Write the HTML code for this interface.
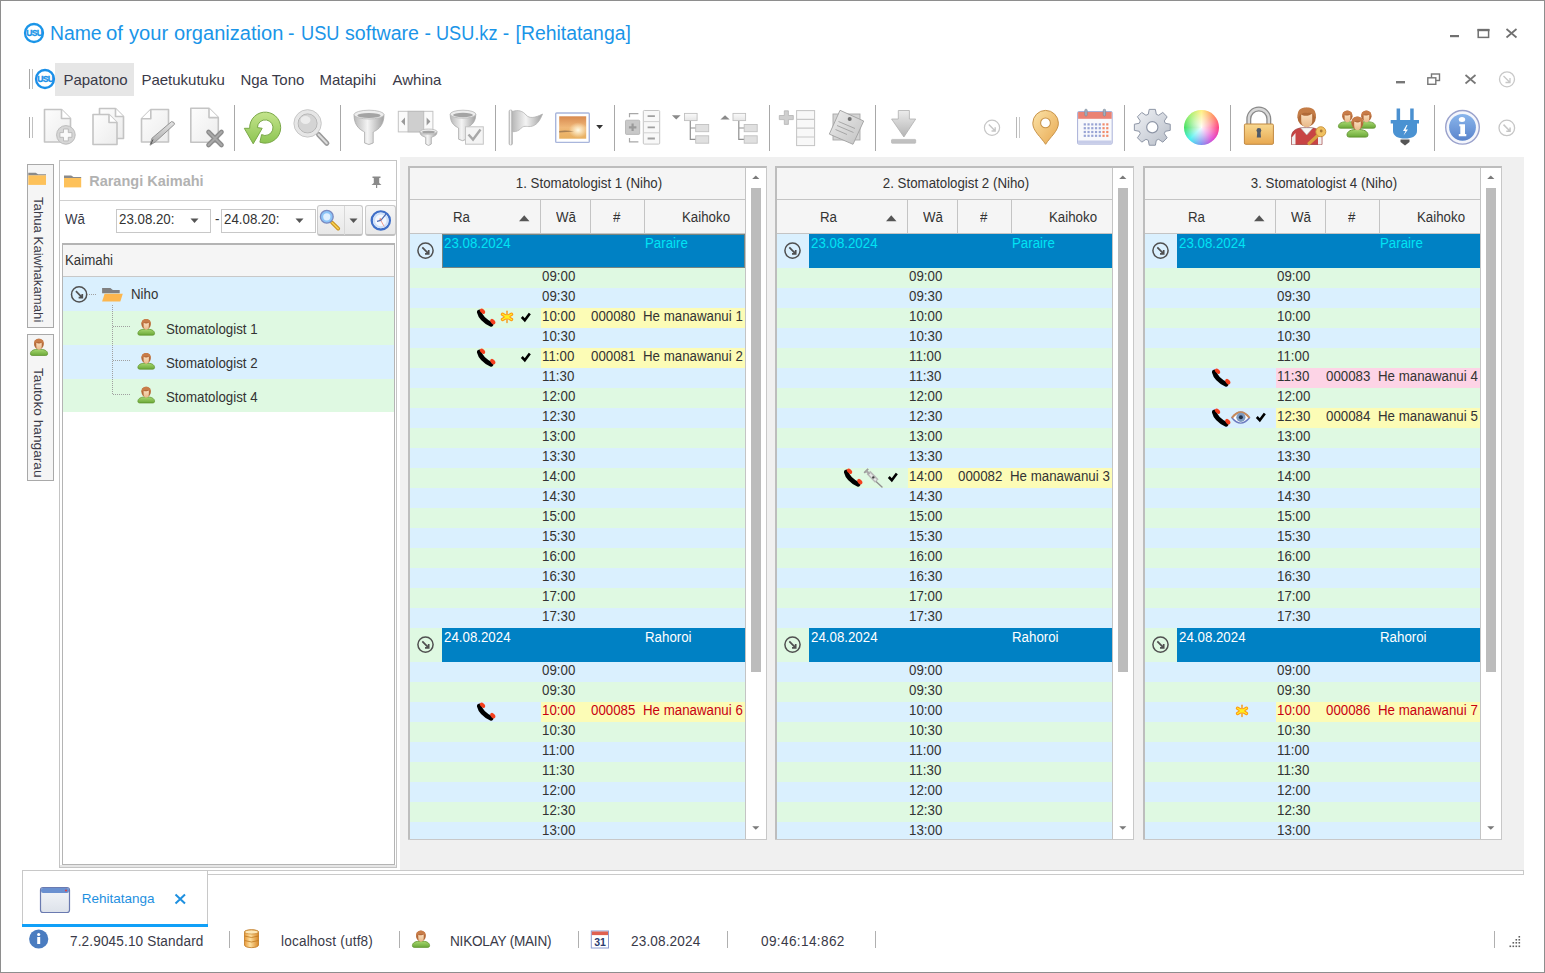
<!DOCTYPE html><html><head><meta charset="utf-8"><style>
html,body{margin:0;padding:0;width:1545px;height:973px;overflow:hidden;background:#fff;font-family:"Liberation Sans", sans-serif;}
div{box-sizing:border-box;}
svg{position:absolute;overflow:visible;}
</style></head><body>
<svg width="0" height="0" style="position:absolute;left:0;top:0"><defs>
<linearGradient id="gPage" x1="0" y1="0" x2="1" y2="1"><stop offset="0" stop-color="#fdfdfd"/><stop offset="1" stop-color="#ececec"/></linearGradient>
<linearGradient id="gGray" x1="0" y1="0" x2="0" y2="1"><stop offset="0" stop-color="#e4e4e4"/><stop offset="1" stop-color="#a8a8a8"/></linearGradient><linearGradient id="gPaper" x1="0" y1="0" x2="1" y2="1"><stop offset="0" stop-color="#eeeeee"/><stop offset="1" stop-color="#c2c2c2"/></linearGradient><linearGradient id="gArrow" x1="0" y1="0" x2="0" y2="1"><stop offset="0" stop-color="#ececec"/><stop offset="1" stop-color="#b4b4b4"/></linearGradient>
<linearGradient id="gGrayH" x1="0" y1="0" x2="1" y2="0"><stop offset="0" stop-color="#b8b8b8"/><stop offset="0.45" stop-color="#f4f4f4"/><stop offset="1" stop-color="#a0a0a0"/></linearGradient>
<linearGradient id="gGreen" x1="0" y1="0" x2="0" y2="1"><stop offset="0" stop-color="#c4e48c"/><stop offset="1" stop-color="#8cc452"/></linearGradient>
<linearGradient id="gSun" x1="0" y1="0" x2="0" y2="1"><stop offset="0" stop-color="#d88a50"/><stop offset="0.5" stop-color="#f0b878"/><stop offset="1" stop-color="#e8b060"/></linearGradient>
<radialGradient id="gSunR" cx="0.7" cy="0.62" r="0.35"><stop offset="0" stop-color="#fffbe8"/><stop offset="1" stop-color="#fff4d0" stop-opacity="0"/></radialGradient>
<linearGradient id="gPin" x1="0" y1="0" x2="1" y2="1"><stop offset="0" stop-color="#fbe3a8"/><stop offset="1" stop-color="#e8a850"/></linearGradient>
<linearGradient id="gGear" x1="0" y1="0" x2="1" y2="1"><stop offset="0" stop-color="#f0f2f6"/><stop offset="1" stop-color="#b8bec8"/></linearGradient>
<linearGradient id="gLock" x1="0" y1="0" x2="0" y2="1"><stop offset="0" stop-color="#f8d890"/><stop offset="1" stop-color="#e8a850"/></linearGradient>
<linearGradient id="gInfo" x1="0" y1="0" x2="0" y2="1"><stop offset="0" stop-color="#8ab6ec"/><stop offset="1" stop-color="#5a84cc"/></linearGradient>
<linearGradient id="gBody" x1="0" y1="0" x2="0" y2="1"><stop offset="0" stop-color="#a8d870"/><stop offset="1" stop-color="#6aa838"/></linearGradient>
<linearGradient id="gFace" x1="0" y1="0" x2="0" y2="1"><stop offset="0" stop-color="#fbe0c0"/><stop offset="1" stop-color="#e8b888"/></linearGradient>
<linearGradient id="gBtn" x1="0" y1="0" x2="0" y2="1"><stop offset="0" stop-color="#fafafa"/><stop offset="1" stop-color="#e6e6e6"/></linearGradient>
<linearGradient id="gLens" x1="0" y1="0" x2="1" y2="1"><stop offset="0" stop-color="#d8ecff"/><stop offset="1" stop-color="#4a90e0"/></linearGradient>
<linearGradient id="gDB" x1="0" y1="0" x2="1" y2="0"><stop offset="0" stop-color="#e89838"/><stop offset="0.4" stop-color="#fde0a0"/><stop offset="1" stop-color="#d88828"/></linearGradient>
<linearGradient id="gWin" x1="0" y1="0" x2="0" y2="1"><stop offset="0" stop-color="#f4f6fa"/><stop offset="1" stop-color="#dde2ea"/></linearGradient>
</defs></svg>
<div style="position:absolute;left:0px;top:0px;width:1545px;height:973px;border:1px solid #8e8e8e;background:#fff"></div>
<svg style="left:21.5px;top:20.5px" width="24" height="24"><circle cx="12" cy="12" r="9" fill="none" stroke="#1a95e8" stroke-width="2.3"/><text x="12.2" y="15.1" font-family="Liberation Sans" font-weight="bold" font-size="8.6" fill="#1a95e8" text-anchor="middle" letter-spacing="-0.7" stroke="#1a95e8" stroke-width="0.35">USU</text></svg>
<div style="position:absolute;left:49.9px;top:21.93px;font-size:19.40px;line-height:22.29px;color:#1a95e8;white-space:nowrap;">Name</div>
<div style="position:absolute;left:106.3px;top:21.93px;font-size:19.40px;line-height:22.29px;color:#1a95e8;white-space:nowrap;transform:scaleX(1.05);transform-origin:0 0;">of</div>
<div style="position:absolute;left:129.2px;top:21.93px;font-size:19.40px;line-height:22.29px;color:#1a95e8;white-space:nowrap;transform:scaleX(1.04);transform-origin:0 0;">your</div>
<div style="position:absolute;left:173.6px;top:21.93px;font-size:19.40px;line-height:22.29px;color:#1a95e8;white-space:nowrap;transform:scaleX(1.035);transform-origin:0 0;">organization</div>
<div style="position:absolute;left:288.1px;top:21.93px;font-size:19.40px;line-height:22.29px;color:#1a95e8;white-space:nowrap;">-</div>
<div style="position:absolute;left:300.5px;top:21.93px;font-size:19.40px;line-height:22.29px;color:#1a95e8;white-space:nowrap;transform:scaleX(0.94);transform-origin:0 0;">USU</div>
<div style="position:absolute;left:344.8px;top:21.93px;font-size:19.40px;line-height:22.29px;color:#1a95e8;white-space:nowrap;transform:scaleX(1.01);transform-origin:0 0;">software</div>
<div style="position:absolute;left:424.6px;top:21.93px;font-size:19.40px;line-height:22.29px;color:#1a95e8;white-space:nowrap;">-</div>
<div style="position:absolute;left:436.3px;top:21.93px;font-size:19.40px;line-height:22.29px;color:#1a95e8;white-space:nowrap;transform:scaleX(0.935);transform-origin:0 0;">USU.kz</div>
<div style="position:absolute;left:502.8px;top:21.93px;font-size:19.40px;line-height:22.29px;color:#1a95e8;white-space:nowrap;">-</div>
<div style="position:absolute;left:515.5px;top:21.93px;font-size:19.40px;line-height:22.29px;color:#1a95e8;white-space:nowrap;">[Rehitatanga]</div>
<svg style="left:1445px;top:25px" width="80" height="20"><rect x="5" y="10" width="9" height="2.2" fill="#707070"/><rect x="33.2" y="4.6" width="10.4" height="7.8" fill="none" stroke="#707070" stroke-width="1.5"/><rect x="32.5" y="4" width="12" height="2.2" fill="#707070"/><path d="M61.5 4 L71.5 12.5 M71.5 4 L61.5 12.5" stroke="#707070" stroke-width="1.7"/></svg>
<div style="position:absolute;left:29px;top:69px;width:1px;height:20px;background:#a8a8a8"></div>
<div style="position:absolute;left:32px;top:69px;width:1px;height:20px;background:#c0c0c0"></div>
<div style="position:absolute;left:55px;top:63px;width:79px;height:33px;background:#e6e6e6"></div>
<svg style="left:33px;top:66.5px" width="24" height="24"><circle cx="12" cy="12" r="9" fill="none" stroke="#1a8fe8" stroke-width="2.3"/><text x="12.2" y="15.1" font-family="Liberation Sans" font-weight="bold" font-size="8.6" fill="#1a8fe8" text-anchor="middle" letter-spacing="-0.7" stroke="#1a8fe8" stroke-width="0.35">USU</text></svg>
<div style="position:absolute;left:63.4px;top:70.78px;font-size:15.00px;line-height:17.23px;color:#3a3a48;white-space:nowrap;">Papatono</div>
<div style="position:absolute;left:141.4px;top:70.78px;font-size:15.00px;line-height:17.23px;color:#3a3a48;white-space:nowrap;">Paetukutuku</div>
<div style="position:absolute;left:240.4px;top:70.78px;font-size:15.00px;line-height:17.23px;color:#3a3a48;white-space:nowrap;">Nga Tono</div>
<div style="position:absolute;left:319.4px;top:70.78px;font-size:15.00px;line-height:17.23px;color:#3a3a48;white-space:nowrap;">Matapihi</div>
<div style="position:absolute;left:392.5px;top:70.78px;font-size:15.00px;line-height:17.23px;color:#3a3a48;white-space:nowrap;">Awhina</div>
<svg style="left:1390px;top:68px" width="140" height="24"><rect x="6" y="13" width="9" height="2.4" fill="#777"/><rect x="41.5" y="6" width="8" height="6.5" fill="none" stroke="#777" stroke-width="1.4"/><rect x="37.8" y="9.8" width="8" height="6.5" fill="#fff" stroke="#777" stroke-width="1.4"/><path d="M75.5 7 L85.5 15.5 M85.5 7 L75.5 15.5" stroke="#777" stroke-width="1.7"/><circle cx="117" cy="11.3" r="7.5" fill="none" stroke="#c8c8c8" stroke-width="1.3"/><path d="M113.5 8 L120 14.5 M120 10 L120 14.5 L115.5 14.5" stroke="#c8c8c8" stroke-width="1.3" fill="none"/></svg>
<div style="position:absolute;left:29px;top:117px;width:1px;height:21px;background:#a8a8a8"></div>
<div style="position:absolute;left:32px;top:117px;width:1px;height:21px;background:#c0c0c0"></div>
<div style="position:absolute;left:234px;top:105px;width:1px;height:46px;background:#a8a8a8"></div>
<div style="position:absolute;left:340px;top:105px;width:1px;height:46px;background:#a8a8a8"></div>
<div style="position:absolute;left:495px;top:105px;width:1px;height:46px;background:#a8a8a8"></div>
<div style="position:absolute;left:614px;top:105px;width:1px;height:46px;background:#a8a8a8"></div>
<div style="position:absolute;left:769px;top:105px;width:1px;height:46px;background:#a8a8a8"></div>
<div style="position:absolute;left:875px;top:105px;width:1px;height:46px;background:#a8a8a8"></div>
<div style="position:absolute;left:1124px;top:105px;width:1px;height:46px;background:#a8a8a8"></div>
<div style="position:absolute;left:1230px;top:105px;width:1px;height:46px;background:#a8a8a8"></div>
<div style="position:absolute;left:1434px;top:105px;width:1px;height:46px;background:#a8a8a8"></div>
<div style="position:absolute;left:1016px;top:117px;width:1px;height:21px;background:#b8b8b8"></div>
<div style="position:absolute;left:1019px;top:117px;width:1px;height:21px;background:#c8c8c8"></div>
<svg style="left:0;top:0" width="1545" height="160"><path d="M44.5 109.5 H61.5 L70.5 118.5 V142.0 H44.5 Z" fill="url(#gPage)" stroke="#c4c4c4" stroke-width="1.6" stroke-linejoin="round"/><path d="M61.5 109.5 V118.5 H70.5" fill="#fff" stroke="#c4c4c4" stroke-width="1.6" stroke-linejoin="round"/><circle cx="65.9" cy="134.9" r="9.3" fill="#d6d6d6" stroke="#bcbcbc" stroke-width="1"/><path d="M63.5 129 H68.3 V132.6 H71.9 V137.3 H68.3 V140.9 H63.5 V137.3 H59.9 V132.6 H63.5 Z" fill="#fafafa" stroke="#b0b0b0" stroke-width="0.8"/><path d="M99.5 108.5 H115.5 L123.5 116.5 V138.5 H99.5 Z" fill="url(#gPage)" stroke="#c4c4c4" stroke-width="1.6" stroke-linejoin="round"/><path d="M115.5 108.5 V116.5 H123.5" fill="#fff" stroke="#c4c4c4" stroke-width="1.6" stroke-linejoin="round"/><path d="M93 114.5 H109 L117 122.5 V144.5 H93 Z" fill="url(#gPage)" stroke="#c4c4c4" stroke-width="1.6" stroke-linejoin="round"/><path d="M109 114.5 V122.5 H117" fill="#fff" stroke="#c4c4c4" stroke-width="1.6" stroke-linejoin="round"/><path d="M150.8 109.5 H168.5 V142.0 H141.5 V118.8 Z" fill="url(#gPage)" stroke="#c4c4c4" stroke-width="1.6" stroke-linejoin="round"/><path d="M150.8 109.5 V118.8 H141.5" fill="#fff" stroke="#c4c4c4" stroke-width="1.6" stroke-linejoin="round"/><path d="M150 145.2 L152 138.2 L171.5 121.6 Q174.2 121.5 174.6 124.2 L155.4 141.8 Z" fill="url(#gGray)" stroke="#8a8a8a" stroke-width="0.9"/><path d="M151 144 L153 139.5" stroke="#555" stroke-width="1"/><path d="M190.8 108.3 H209.0 L218.3 117.6 V142.3 H190.8 Z" fill="url(#gPage)" stroke="#c4c4c4" stroke-width="1.6" stroke-linejoin="round"/><path d="M209.0 108.3 V117.6 H218.3" fill="#fff" stroke="#c4c4c4" stroke-width="1.6" stroke-linejoin="round"/><path d="M208.5 132 L221.5 145 M221.5 132 L208.5 145" stroke="#8c8c8c" stroke-width="4.6" stroke-linecap="round"/><path d="M208.5 132 L221.5 145 M221.5 132 L208.5 145" stroke="#a8a8a8" stroke-width="2" stroke-linecap="round"/><path d="M244.3 128.3 H249.7 A15.5 15.5 0 1 1 259.9 142.2 L261.6 134.6 A7.8 7.8 0 1 0 257.4 127.6 L262.2 128.3 L253.2 143.8 Z" fill="url(#gGreen)" stroke="#7aa848" stroke-width="1" stroke-linejoin="round"/><path d="M318.5 134.5 L326.8 143.2" stroke="#9a9a9a" stroke-width="5.2" stroke-linecap="round"/><path d="M318.5 134.5 L326.8 143.2" stroke="#dcdcdc" stroke-width="2" stroke-linecap="round"/><circle cx="307.6" cy="123.4" r="12" fill="none" stroke="#e6e6e6" stroke-width="3.6"/><circle cx="307.6" cy="123.4" r="13.7" fill="none" stroke="#c4c4c4" stroke-width="0.9"/><circle cx="307.6" cy="123.4" r="9.6" fill="#d4d4d4" stroke="#b4b4b4" stroke-width="1"/><ellipse cx="305.5" cy="120" rx="5" ry="4" fill="#ececec"/><path d="M354 114.60000000000001 C354 127.65 362.1 130.5 364.6 132 V143.0 Q369.0 146.0 373.2 143.0 V132 C375.7 130.5 384 127.65 384 114.60000000000001 Z" fill="url(#gGrayH)" stroke="#a8a8a8" stroke-width="0.8"/><ellipse cx="369.0" cy="114.60000000000001" rx="15.0" ry="4.4" fill="#ededed" stroke="#b8b8b8" stroke-width="0.8"/><ellipse cx="369.0" cy="115.48" rx="11.700000000000001" ry="2.4200000000000004" fill="#a4a4a4"/><rect x="398.3" y="111.3" width="34.6" height="20.6" fill="#fafafa" stroke="#c4c4c4" stroke-width="1"/><rect x="408" y="111.3" width="15.8" height="20.6" fill="#cfcfcf" stroke="#b8b8b8" stroke-width="0.8"/><path d="M405 117.5 V125.5 L401.2 121.5 Z" fill="#9a9a9a"/><path d="M426.6 117.5 V125.5 L430.4 121.5 Z" fill="#9a9a9a"/><path d="M420 131.6 C420 136.025 423.2 136.0 425.7 137.5 V144.0 Q428.5 147.0 431.3 144.0 V137.5 C433.8 136.0 437 136.025 437 131.6 Z" fill="url(#gGrayH)" stroke="#a8a8a8" stroke-width="0.8"/><ellipse cx="428.5" cy="131.6" rx="8.5" ry="2.6" fill="#ededed" stroke="#b8b8b8" stroke-width="0.8"/><ellipse cx="428.5" cy="132.12" rx="6.63" ry="1.4300000000000002" fill="#a4a4a4"/><path d="M450.2 114.2 C450.2 124.55 456.1 126.5 458.6 128 V139.2 Q463.0 142.2 466 139.2 V128 C468.5 126.5 475.8 124.55 475.8 114.2 Z" fill="url(#gGrayH)" stroke="#a8a8a8" stroke-width="0.8"/><ellipse cx="463.0" cy="114.2" rx="12.800000000000011" ry="4" fill="#ededed" stroke="#b8b8b8" stroke-width="0.8"/><ellipse cx="463.0" cy="115.0" rx="9.984000000000009" ry="2.2" fill="#a4a4a4"/><rect x="465.5" y="126.8" width="17.8" height="17.4" fill="#f4f4f4" stroke="#c4c4c4" stroke-width="1"/><path d="M468.5 134.5 L473 139.5 L480.5 129.5" fill="none" stroke="#a8a8a8" stroke-width="2.4"/><rect x="509" y="110" width="3.4" height="35" rx="1.5" fill="url(#gGrayH)" stroke="#a8a8a8" stroke-width="0.6"/><path d="M512.4 111.5 C518 109.5 523 111 526 115 C529.5 118.8 535 118 542.5 114 C540 121 536 126 530.5 126.5 C526 127 524 124.5 519.5 129.8 C517 131.5 514 132 512.4 131.5 Z" fill="url(#gGrayH)" stroke="#b4b4b4" stroke-width="0.8"/><rect x="555.7" y="113" width="33.6" height="29.4" rx="1" fill="#fff" stroke="#a9b6dc" stroke-width="1.4"/><rect x="559.2" y="116.3" width="27" height="22.4" fill="url(#gSun)"/><rect x="559.2" y="116.3" width="27" height="22.4" fill="url(#gSunR)"/><path d="M559.2 131 Q566 130 574 131.5 L559.2 132.5 Z" fill="#8a6a48" opacity="0.7"/><path d="M596.2 125 H603 L599.6 128.9 Z" fill="#333"/><path d="M629.5 117.3 V113.6 H638.4 M629.5 138 V141.8 H638.4" fill="none" stroke="#a8a8a8" stroke-width="1.2"/><rect x="625.5" y="120.2" width="14.2" height="14.2" rx="1" fill="#c8c8c8" stroke="#b0b0b0" stroke-width="0.8"/><path d="M632.6 123.5 V131 M628.9 127.3 H636.4" stroke="#9a9a9a" stroke-width="2.2"/><rect x="643.3" y="110.5" width="16.4" height="33.6" rx="1" fill="#f8f8f8" stroke="#c4c4c4" stroke-width="1"/><path d="M643.3 121.6 H659.7 M643.3 132.8 H659.7" stroke="#d0d0d0" stroke-width="1"/><path d="M647.6 116.1 H654.9 M647.6 127.3 H654.9 M647.6 138.5 H654.9" stroke="#a0a0a0" stroke-width="1.8"/><path d="M671.9 115.2 H680.6 L676.25 119.6 Z" fill="#8a8a8a"/><path d="M690.3 120.5 V139.4 H696.0 M690.3 128 H696.0" fill="none" stroke="#909090" stroke-width="1.2"/><rect x="684.5" y="113.4" width="12.6" height="7.2" fill="url(#gBtn)" stroke="#c0c0c0" stroke-width="0.9"/><rect x="695.7" y="124.5" width="13" height="7.2" fill="#e0e0e0" stroke="#c0c0c0" stroke-width="0.9"/><rect x="695.7" y="135.8" width="13" height="7.4" fill="#e0e0e0" stroke="#c0c0c0" stroke-width="0.9"/><path d="M720.4 119.6 H729.6999999999999 L725.05 115.2 Z" fill="#8a8a8a"/><path d="M738.8 120.5 V139.4 H744.5 M738.8 128 H744.5" fill="none" stroke="#909090" stroke-width="1.2"/><rect x="733.0" y="113.4" width="12.6" height="7.2" fill="url(#gBtn)" stroke="#c0c0c0" stroke-width="0.9"/><rect x="744.2" y="124.5" width="13" height="7.2" fill="#e0e0e0" stroke="#c0c0c0" stroke-width="0.9"/><rect x="744.2" y="135.8" width="13" height="7.4" fill="#e0e0e0" stroke="#c0c0c0" stroke-width="0.9"/><path d="M784.3 110.8 H788.4 V115.5 H793.3 V119.6 H788.4 V124.4 H784.3 V119.6 H779.3 V115.5 H784.3 Z" fill="#cfcfcf" stroke="#b4b4b4" stroke-width="0.8"/><rect x="796.6" y="110.6" width="18" height="35" fill="#f8f8f8" stroke="#c4c4c4" stroke-width="1"/><path d="M796.6 119.3 H814.6 M796.6 128.1 H814.6 M796.6 137 H814.6" stroke="#c8c8c8" stroke-width="1.2"/><rect x="833" y="114" width="27" height="26" fill="#d4d4d4" stroke="#a8a8a8" stroke-width="0.9"/><path d="M829.3 134.1 L840 110.3 L863.7 121 L853 144.3 Z" fill="url(#gPaper)" stroke="#a0a0a0" stroke-width="0.9"/><path d="M838.5 121.5 L855 128.5 M837 125.5 L853.5 132.5 M835.5 129.5 L847 134.5" stroke="#999" stroke-width="0.8"/><circle cx="849.7" cy="119" r="2" fill="#707070"/><path d="M898.3 110.5 H909.4 V119 H915.7 L903.9 137 L891.6 119 H898.3 Z" fill="url(#gArrow)" stroke="#b0b0b0" stroke-width="0.8"/><rect x="891.5" y="139.4" width="24.2" height="3.9" rx="0.8" fill="#c0c0c0" stroke="#b0b0b0" stroke-width="0.6"/><circle cx="992" cy="127.8" r="7.6" fill="none" stroke="#c6c6c6" stroke-width="1.2"/><path d="M988.808 124.608 L995.192 130.992 M995.192 127.32119999999999 V130.992 H991.5212" fill="none" stroke="#c6c6c6" stroke-width="1.38"/><path d="M1045.6 144.3 C1041 137 1032.8 131 1032.8 123.2 A12.8 12.8 0 0 1 1058.4 123.2 C1058.4 131 1050.2 137 1045.6 144.3 Z" fill="url(#gPin)" stroke="#c8944a" stroke-width="1"/><circle cx="1045.5" cy="122.9" r="4.9" fill="#fff" stroke="#c8944a" stroke-width="1.1"/><rect x="1077.6" y="111.5" width="34.6" height="32.6" rx="1.2" fill="#f8f9fc" stroke="#a8b0d8" stroke-width="1"/><rect x="1078.1" y="112" width="33.6" height="6.8" fill="#ea8274"/><rect x="1078.1" y="140.5" width="33.6" height="3.2" fill="#c6cce8"/><rect x="1084.8" y="109.2" width="2.4" height="6.8" rx="1" fill="#a0b0c0" stroke="#708090" stroke-width="0.5"/><rect x="1103.2" y="109.2" width="2.4" height="6.8" rx="1" fill="#a0b0c0" stroke="#708090" stroke-width="0.5"/><rect x="1083.70" y="123.30" width="2.2" height="2.2" fill="#98a4d4"/><rect x="1087.45" y="123.30" width="2.2" height="2.2" fill="#98a4d4"/><rect x="1091.20" y="123.30" width="2.2" height="2.2" fill="#98a4d4"/><rect x="1094.95" y="123.30" width="2.2" height="2.2" fill="#98a4d4"/><rect x="1098.70" y="123.30" width="2.2" height="2.2" fill="#98a4d4"/><rect x="1102.45" y="123.30" width="2.2" height="2.2" fill="#f08a6a"/><rect x="1106.20" y="123.30" width="2.2" height="2.2" fill="#f08a6a"/><rect x="1083.70" y="127.10" width="2.2" height="2.2" fill="#98a4d4"/><rect x="1087.45" y="127.10" width="2.2" height="2.2" fill="#98a4d4"/><rect x="1091.20" y="127.10" width="2.2" height="2.2" fill="#98a4d4"/><rect x="1094.95" y="127.10" width="2.2" height="2.2" fill="#98a4d4"/><rect x="1098.70" y="127.10" width="2.2" height="2.2" fill="#98a4d4"/><rect x="1102.45" y="127.10" width="2.2" height="2.2" fill="#f08a6a"/><rect x="1106.20" y="127.10" width="2.2" height="2.2" fill="#f08a6a"/><rect x="1083.70" y="130.90" width="2.2" height="2.2" fill="#98a4d4"/><rect x="1087.45" y="130.90" width="2.2" height="2.2" fill="#98a4d4"/><rect x="1091.20" y="130.90" width="2.2" height="2.2" fill="#98a4d4"/><rect x="1094.95" y="130.90" width="2.2" height="2.2" fill="#98a4d4"/><rect x="1098.70" y="130.90" width="2.2" height="2.2" fill="#98a4d4"/><rect x="1102.45" y="130.90" width="2.2" height="2.2" fill="#f08a6a"/><rect x="1106.20" y="130.90" width="2.2" height="2.2" fill="#f08a6a"/><rect x="1083.70" y="134.70" width="2.2" height="2.2" fill="#98a4d4"/><rect x="1087.45" y="134.70" width="2.2" height="2.2" fill="#98a4d4"/><rect x="1091.20" y="134.70" width="2.2" height="2.2" fill="#98a4d4"/><rect x="1094.95" y="134.70" width="2.2" height="2.2" fill="#98a4d4"/><rect x="1098.70" y="134.70" width="2.2" height="2.2" fill="#98a4d4"/><rect x="1102.45" y="134.70" width="2.2" height="2.2" fill="#f08a6a"/><rect x="1106.20" y="134.70" width="2.2" height="2.2" fill="#f08a6a"/><polygon points="1148.28,114.31 1149.22,109.36 1155.38,109.36 1156.32,114.31 1158.65,115.27 1162.81,112.44 1167.16,116.79 1164.33,120.95 1165.29,123.28 1170.24,124.22 1170.24,130.38 1165.29,131.32 1164.33,133.65 1167.16,137.81 1162.81,142.16 1158.65,139.33 1156.32,140.29 1155.38,145.24 1149.22,145.24 1148.28,140.29 1145.95,139.33 1141.79,142.16 1137.44,137.81 1140.27,133.65 1139.31,131.32 1134.36,130.38 1134.36,124.22 1139.31,123.28 1140.27,120.95 1137.44,116.79 1141.79,112.44 1145.95,115.27" fill="url(#gGear)" stroke="#8e96a6" stroke-width="1" stroke-linejoin="round"/><circle cx="1152.3" cy="127.3" r="5.6" fill="#fff" stroke="#8e96a6" stroke-width="1.2"/><path d="M1248.8 124.5 V119 A10 10 0 0 1 1268.8 119 V124.5" fill="none" stroke="#8a8a8a" stroke-width="5"/><path d="M1248.8 124.5 V119 A10 10 0 0 1 1268.8 119 V124.5" fill="none" stroke="#d8d8d8" stroke-width="2.4"/><rect x="1244.4" y="124" width="29" height="20.3" rx="1.2" fill="url(#gLock)" stroke="#c08840" stroke-width="1"/><circle cx="1258.9" cy="130.5" r="2.4" fill="#505a68"/><path d="M1257.4 131 L1256.8 137.6 H1261 L1260.4 131 Z" fill="#505a68"/><path d="M1291.5 144.5 V137 C1291.5 130 1297 127.5 1306.7 127.5 C1316.4 127.5 1322 130 1322 137 V144.5 Z" fill="#c84444" stroke="#903030" stroke-width="0.7"/><path d="M1300.5 127.8 L1306.7 135 L1313 127.8 Z" fill="#f8f8f8" stroke="#b0b0b0" stroke-width="0.6"/><path d="M1291.8 137.5 V144.5 H1295.5 V133 Z" fill="#f0f0f0"/><path d="M1321.7 137.5 V144.5 H1318 V133 Z" fill="#f0f0f0"/><ellipse cx="1306.7" cy="117.3" rx="9.2" ry="9.6" fill="#b06a38"/><path d="M1301.2 114.5 C1303.5 116.5 1309.5 116.3 1312.2 113.5 V120.5 C1312.2 125 1309.5 127.2 1306.7 127.2 C1303.9 127.2 1301.2 125 1301.2 120.5 Z" fill="url(#gFace)"/><path d="M1298 119 C1296.5 110 1300.5 107.6 1306.7 107.6 C1312.9 107.6 1316.9 110 1315.4 119 C1314.5 114.5 1311.5 112.3 1307.5 113 C1304 112.3 1299.5 113.5 1298 119 Z" fill="#c47c46"/><path d="M1320 133.5 L1309 143.5" stroke="#d8a040" stroke-width="3.2" stroke-linecap="round"/><circle cx="1320.8" cy="131.7" r="5" fill="#f0c060" stroke="#c89038" stroke-width="0.9"/><circle cx="1321.2" cy="131" r="1.4" fill="#a87838"/><g transform="translate(1338 110.5) scale(1.05)"><path d="M0.4 15.2 C0.4 12 3.8 10.6 9 10.6 C14.2 10.6 17.6 12 17.6 15.2 Q17.6 16.9 15.8 16.9 H2.2 Q0.4 16.9 0.4 15.2 Z" fill="url(#gBody)" stroke="#5a8e28" stroke-width="0.7"/><ellipse cx="8.9" cy="5.4" rx="4.9" ry="5.3" fill="#b46a3a"/><path d="M6.3 4.2 C7.5 5.2 10.5 5 11.7 3.8 V7.5 C11.7 10.2 10.3 11.2 9 11.2 C7.7 11.2 6.3 10.2 6.3 7.5 Z" fill="url(#gFace)"/><path d="M4.2 6 C3.6 1.5 6.2 0.2 8.9 0.2 C11.6 0.2 14.2 1.5 13.6 6 C12.8 4 11.2 3.3 9.5 3.6 C8 3.2 5.2 3.6 4.2 6 Z" fill="#c87c48"/></g><g transform="translate(1357 110.5) scale(1.05)"><path d="M0.4 15.2 C0.4 12 3.8 10.6 9 10.6 C14.2 10.6 17.6 12 17.6 15.2 Q17.6 16.9 15.8 16.9 H2.2 Q0.4 16.9 0.4 15.2 Z" fill="url(#gBody)" stroke="#5a8e28" stroke-width="0.7"/><ellipse cx="8.9" cy="5.4" rx="4.9" ry="5.3" fill="#b46a3a"/><path d="M6.3 4.2 C7.5 5.2 10.5 5 11.7 3.8 V7.5 C11.7 10.2 10.3 11.2 9 11.2 C7.7 11.2 6.3 10.2 6.3 7.5 Z" fill="url(#gFace)"/><path d="M4.2 6 C3.6 1.5 6.2 0.2 8.9 0.2 C11.6 0.2 14.2 1.5 13.6 6 C12.8 4 11.2 3.3 9.5 3.6 C8 3.2 5.2 3.6 4.2 6 Z" fill="#c87c48"/></g><g transform="translate(1346.5 116.5) scale(1.22)"><path d="M0.4 15.2 C0.4 12 3.8 10.6 9 10.6 C14.2 10.6 17.6 12 17.6 15.2 Q17.6 16.9 15.8 16.9 H2.2 Q0.4 16.9 0.4 15.2 Z" fill="url(#gBody)" stroke="#5a8e28" stroke-width="0.7"/><ellipse cx="8.9" cy="5.4" rx="4.9" ry="5.3" fill="#b46a3a"/><path d="M6.3 4.2 C7.5 5.2 10.5 5 11.7 3.8 V7.5 C11.7 10.2 10.3 11.2 9 11.2 C7.7 11.2 6.3 10.2 6.3 7.5 Z" fill="url(#gFace)"/><path d="M4.2 6 C3.6 1.5 6.2 0.2 8.9 0.2 C11.6 0.2 14.2 1.5 13.6 6 C12.8 4 11.2 3.3 9.5 3.6 C8 3.2 5.2 3.6 4.2 6 Z" fill="#c87c48"/></g><rect x="1396.6" y="108.5" width="3.5" height="12" fill="#4a90d0"/><rect x="1410.2" y="108.5" width="3.5" height="12" fill="#4a90d0"/><path d="M1390.7 120 H1419 V123.5 H1417 V131 C1417 136 1412 138.5 1405 138.5 C1398 138.5 1393 136 1393 131 V123.5 H1390.7 Z" fill="#4a92d2"/><path d="M1406.5 125 L1403 131 H1405.5 L1403.5 135.5 L1408 129.5 H1405.5 L1407.5 125 Z" fill="#fff"/><path d="M1400.5 139.5 H1409.5 V142 L1405 145.5 L1400.5 142 Z" fill="#555"/><circle cx="1462.5" cy="127.3" r="16.8" fill="#f4f6fc" stroke="#9aa2cc" stroke-width="1.4"/><circle cx="1462.5" cy="127.3" r="13.4" fill="url(#gInfo)"/><ellipse cx="1462" cy="119.6" rx="3.2" ry="2.5" fill="#fff"/><path d="M1459.3 124.3 H1465 V134 H1466.3 V136.2 H1458.8 V134 H1460.3 V126.2 H1459.3 Z" fill="#fff"/><circle cx="1506.8" cy="127.9" r="7.8" fill="none" stroke="#c6c6c6" stroke-width="1.3"/><path d="M1503.524 124.62400000000001 L1510.076 131.17600000000002 M1510.076 127.4086 V131.17600000000002 H1506.3085999999998" fill="none" stroke="#c6c6c6" stroke-width="1.4949999999999999"/></svg>
<div style="position:absolute;left:1183.8px;top:109.8px;width:35px;height:35px;border-radius:50%;background:radial-gradient(circle at 50% 50%, rgba(255,255,255,0.95) 0, rgba(255,255,255,0.5) 35%, rgba(255,255,255,0) 70%), conic-gradient(from 0deg, #fff080, #ff9060, #ff4080, #e040d0, #8090f0, #40f0f0, #40e060, #a0f070, #fff080)"></div>
<div style="position:absolute;left:400px;top:157px;width:1124px;height:714px;background:#f0f0f0"></div>
<div style="position:absolute;left:27px;top:164px;width:27px;height:164px;border:1px solid #a9a9a9;background:#f5f5f5"></div>
<div style="position:absolute;left:27px;top:334px;width:27px;height:147px;border:1px solid #a9a9a9;background:#f5f5f5"></div>
<svg style="left:0;top:0" width="400" height="500"><path d="M28.3 172.8 H35.734 L38.035000000000004 174.3 H46.0 V175.38000000000002 H28.3 Z" fill="#8a8a8a"/><rect x="28.3" y="175.38000000000002" width="17.7" height="9.52" fill="#fdc15a"/><g transform="translate(30 338.6) scale(1.0)"><path d="M0.4 15.2 C0.4 12 3.8 10.6 9 10.6 C14.2 10.6 17.6 12 17.6 15.2 Q17.6 16.9 15.8 16.9 H2.2 Q0.4 16.9 0.4 15.2 Z" fill="url(#gBody)" stroke="#5a8e28" stroke-width="0.7"/><ellipse cx="8.9" cy="5.4" rx="4.9" ry="5.3" fill="#b46a3a"/><path d="M6.3 4.2 C7.5 5.2 10.5 5 11.7 3.8 V7.5 C11.7 10.2 10.3 11.2 9 11.2 C7.7 11.2 6.3 10.2 6.3 7.5 Z" fill="url(#gFace)"/><path d="M4.2 6 C3.6 1.5 6.2 0.2 8.9 0.2 C11.6 0.2 14.2 1.5 13.6 6 C12.8 4 11.2 3.3 9.5 3.6 C8 3.2 5.2 3.6 4.2 6 Z" fill="#c87c48"/></g></svg>
<div style="position:absolute;left:45px;top:197px;transform-origin:0 0;transform:rotate(90deg);font-size:13.2px;line-height:14px;color:#3a3a48;white-space:nowrap">Tahua Kaiwhakamahi</div>
<div style="position:absolute;left:45px;top:367.5px;transform-origin:0 0;transform:rotate(90deg);font-size:13.7px;line-height:14px;color:#3a3a48;white-space:nowrap">Tautoko hangarau</div>
<div style="position:absolute;left:59px;top:160px;width:338px;height:708px;border:1px solid #c4c4c4;background:#fff"></div>
<div style="position:absolute;left:60px;top:865px;width:336px;height:2px;background:#e6e6e6"></div>
<div style="position:absolute;left:60px;top:200px;width:336px;height:1px;background:#d0d0d0"></div>
<div style="position:absolute;left:89.2px;top:172.65px;font-size:14.50px;line-height:16.66px;color:#b2b2b2;white-space:nowrap;font-weight:bold">Rarangi Kaimahi</div>
<div style="position:absolute;left:64.8px;top:211.13px;font-size:14.63px;line-height:16.81px;color:#3a3a48;white-space:nowrap;transform:scaleX(0.9091);transform-origin:0 0;">Wā</div>
<div style="position:absolute;left:116px;top:209px;width:95px;height:24px;border:1px solid #c8c8c8;background:#fff"></div>
<div style="position:absolute;left:119px;top:211.13px;font-size:14.63px;line-height:16.81px;color:#333;white-space:nowrap;transform:scaleX(0.9091);transform-origin:0 0;">23.08.20:</div>
<div style="position:absolute;left:221px;top:209px;width:95px;height:24px;border:1px solid #c8c8c8;background:#fff"></div>
<div style="position:absolute;left:224px;top:211.13px;font-size:14.63px;line-height:16.81px;color:#333;white-space:nowrap;transform:scaleX(0.9091);transform-origin:0 0;">24.08.20:</div>
<div style="position:absolute;left:214.5px;top:211.13px;font-size:14.63px;line-height:16.81px;color:#333;white-space:nowrap;transform:scaleX(0.9091);transform-origin:0 0;">-</div>
<svg style="left:190px;top:218px" width="10" height="6"><path d="M0.5 0.5 L8.5 0.5 L4.5 5 Z" fill="#555"/></svg>
<svg style="left:295px;top:218px" width="10" height="6"><path d="M0.5 0.5 L8.5 0.5 L4.5 5 Z" fill="#555"/></svg>
<div style="position:absolute;left:316.5px;top:205px;width:46.5px;height:31px;border:1px solid #cacaca;border-bottom:2px solid #c0c0c0;border-radius:3px;background:linear-gradient(#f6f6f6,#e8e8e8)"></div>
<div style="position:absolute;left:344px;top:206px;width:1px;height:29px;background:#d8d8d8"></div>
<svg style="left:349px;top:218px" width="10" height="6"><path d="M0.5 0.5 L8.5 0.5 L4.5 5 Z" fill="#555"/></svg>
<div style="position:absolute;left:364.5px;top:205px;width:31px;height:31px;border:1px solid #cacaca;border-bottom:2px solid #c0c0c0;border-radius:3px;background:linear-gradient(#f6f6f6,#e8e8e8)"></div>
<div style="position:absolute;left:62px;top:243px;width:333px;height:622px;border:1px solid #b4b4b4;border-top:2px solid #b4b4b4;background:#fff"></div>
<div style="position:absolute;left:63px;top:245px;width:331px;height:32px;background:#f5f5f5;border-bottom:1px solid #c8c8c8"></div>
<div style="position:absolute;left:65.4px;top:252.23px;font-size:14.63px;line-height:16.81px;color:#333;white-space:nowrap;transform:scaleX(0.9091);transform-origin:0 0;">Kaimahi</div>
<div style="position:absolute;left:63px;top:277px;width:331px;height:34px;background:#daf0fe"></div>
<div style="position:absolute;left:63px;top:311px;width:331px;height:34px;background:#dff9e2"></div>
<div style="position:absolute;left:63px;top:345px;width:331px;height:34px;background:#daf0fe"></div>
<div style="position:absolute;left:63px;top:379px;width:331px;height:33px;background:#dff9e2"></div>
<div style="position:absolute;left:131.2px;top:286.33px;font-size:14.63px;line-height:16.81px;color:#333;white-space:nowrap;transform:scaleX(0.9091);transform-origin:0 0;">Niho</div>
<div style="position:absolute;left:165.6px;top:321.03px;font-size:14.63px;line-height:16.81px;color:#333;white-space:nowrap;transform:scaleX(0.9091);transform-origin:0 0;">Stomatologist 1</div>
<div style="position:absolute;left:165.6px;top:355.03px;font-size:14.63px;line-height:16.81px;color:#333;white-space:nowrap;transform:scaleX(0.9091);transform-origin:0 0;">Stomatologist 2</div>
<div style="position:absolute;left:165.6px;top:389.03px;font-size:14.63px;line-height:16.81px;color:#333;white-space:nowrap;transform:scaleX(0.9091);transform-origin:0 0;">Stomatologist 4</div>
<svg style="left:0;top:0" width="400" height="420"><path d="M64 175.5 H71.224 L73.46000000000001 177 H81.2 V178.02 H64 Z" fill="#8a8a8a"/><rect x="64" y="178.02" width="17.2" height="9.379999999999999" fill="#fdc15a"/><path d="M372.5 176.5 H380.5 V178 H379.2 V183 L381.5 185 H371.5 L373.8 183 V178 H372.5 Z" fill="#8a8a8a"/><rect x="376" y="185" width="1.2" height="3" fill="#8a8a8a"/><path d="M332 222.5 L338.2 228.6" stroke="#c89020" stroke-width="3.8" stroke-linecap="round"/><path d="M332 222.5 L338.2 228.6" stroke="#f8d050" stroke-width="1.6" stroke-linecap="round"/><circle cx="326.8" cy="216.8" r="6.4" fill="#8cc4f8" stroke="#7a8ac0" stroke-width="1.3"/><circle cx="326.8" cy="216.8" r="3.6" fill="#dff0ff"/><circle cx="380.8" cy="220.4" r="9.1" fill="#f4f8ff" stroke="#3f6fc8" stroke-width="2.3"/><circle cx="380.8" cy="220.4" r="6.8" fill="none" stroke="#cfe0f8" stroke-width="2"/><path d="M380.8 220.4 L384.2 226.5" stroke="#f0a090" stroke-width="1"/><path d="M380.8 220.4 L386 214.2 M380.8 220.4 L377 221.3" stroke="#4a68b0" stroke-width="1.2"/><circle cx="380.4" cy="219.2" r="1" fill="#e08070"/><circle cx="79.1" cy="294.4" r="7.6" fill="none" stroke="#505050" stroke-width="1.5"/><path d="M75.908 291.20799999999997 L82.29199999999999 297.592 M82.29199999999999 293.9212 V297.592 H78.62119999999999" fill="none" stroke="#505050" stroke-width="1.7249999999999999"/><path d="M87 294.5 H96" stroke="#a0a0a0" stroke-width="1" stroke-dasharray="1 1"/><path d="M102.1 288 H110.38 L112.86399999999999 290 H119.695 V293.36 H102.1 Z" fill="#808080"/><path d="M104.58399999999999 293.628 H122.8 L120.316 301.4 H102.1 Z" fill="#fcb64e"/><path d="M112.5 305 V395 M113 326.5 H131 M113 360.5 H131 M113 394.5 H131" stroke="#a0a0a0" stroke-width="1" stroke-dasharray="1 1"/><g transform="translate(137.5 318.8) scale(0.97)"><path d="M0.4 15.2 C0.4 12 3.8 10.6 9 10.6 C14.2 10.6 17.6 12 17.6 15.2 Q17.6 16.9 15.8 16.9 H2.2 Q0.4 16.9 0.4 15.2 Z" fill="url(#gBody)" stroke="#5a8e28" stroke-width="0.7"/><ellipse cx="8.9" cy="5.4" rx="4.9" ry="5.3" fill="#b46a3a"/><path d="M6.3 4.2 C7.5 5.2 10.5 5 11.7 3.8 V7.5 C11.7 10.2 10.3 11.2 9 11.2 C7.7 11.2 6.3 10.2 6.3 7.5 Z" fill="url(#gFace)"/><path d="M4.2 6 C3.6 1.5 6.2 0.2 8.9 0.2 C11.6 0.2 14.2 1.5 13.6 6 C12.8 4 11.2 3.3 9.5 3.6 C8 3.2 5.2 3.6 4.2 6 Z" fill="#c87c48"/></g><g transform="translate(137.5 352.8) scale(0.97)"><path d="M0.4 15.2 C0.4 12 3.8 10.6 9 10.6 C14.2 10.6 17.6 12 17.6 15.2 Q17.6 16.9 15.8 16.9 H2.2 Q0.4 16.9 0.4 15.2 Z" fill="url(#gBody)" stroke="#5a8e28" stroke-width="0.7"/><ellipse cx="8.9" cy="5.4" rx="4.9" ry="5.3" fill="#b46a3a"/><path d="M6.3 4.2 C7.5 5.2 10.5 5 11.7 3.8 V7.5 C11.7 10.2 10.3 11.2 9 11.2 C7.7 11.2 6.3 10.2 6.3 7.5 Z" fill="url(#gFace)"/><path d="M4.2 6 C3.6 1.5 6.2 0.2 8.9 0.2 C11.6 0.2 14.2 1.5 13.6 6 C12.8 4 11.2 3.3 9.5 3.6 C8 3.2 5.2 3.6 4.2 6 Z" fill="#c87c48"/></g><g transform="translate(137.5 386.6) scale(0.97)"><path d="M0.4 15.2 C0.4 12 3.8 10.6 9 10.6 C14.2 10.6 17.6 12 17.6 15.2 Q17.6 16.9 15.8 16.9 H2.2 Q0.4 16.9 0.4 15.2 Z" fill="url(#gBody)" stroke="#5a8e28" stroke-width="0.7"/><ellipse cx="8.9" cy="5.4" rx="4.9" ry="5.3" fill="#b46a3a"/><path d="M6.3 4.2 C7.5 5.2 10.5 5 11.7 3.8 V7.5 C11.7 10.2 10.3 11.2 9 11.2 C7.7 11.2 6.3 10.2 6.3 7.5 Z" fill="url(#gFace)"/><path d="M4.2 6 C3.6 1.5 6.2 0.2 8.9 0.2 C11.6 0.2 14.2 1.5 13.6 6 C12.8 4 11.2 3.3 9.5 3.6 C8 3.2 5.2 3.6 4.2 6 Z" fill="#c87c48"/></g></svg>
<div style="position:absolute;left:408px;top:166px;width:359px;height:674px;border:2px solid #bdbdbd;border-right:1px solid #c8c8c8;border-bottom:1px solid #c8c8c8;background:#fff"></div>
<div style="position:absolute;left:410px;top:168px;width:336px;height:32px;background:#f5f5f5;border-bottom:1px solid #c4c4c4"></div>
<div style="position:absolute;left:389px;width:400px;text-align:center;top:175.33px;font-size:14.63px;line-height:16.81px;color:#333;white-space:nowrap;transform:scaleX(0.9091);transform-origin:50% 0;">1. Stomatologist 1 (Niho)</div>
<div style="position:absolute;left:410px;top:200px;width:336px;height:34px;background:#f5f5f5;border-bottom:1px solid #c4c4c4"></div>
<div style="position:absolute;left:540px;top:200px;width:1px;height:33px;background:#c4c4c4"></div>
<div style="position:absolute;left:590px;top:200px;width:1px;height:33px;background:#c4c4c4"></div>
<div style="position:absolute;left:644px;top:200px;width:1px;height:33px;background:#c4c4c4"></div>
<div style="position:absolute;left:745px;top:168px;width:1px;height:671px;background:#c4c4c4"></div>
<div style="position:absolute;left:453px;top:208.93px;font-size:14.63px;line-height:16.81px;color:#333;white-space:nowrap;transform:scaleX(0.9091);transform-origin:0 0;">Ra</div>
<svg style="left:519px;top:215px" width="12" height="7"><path d="M0 6.2 L10.5 6.2 L5.25 0.2 Z" fill="#555"/></svg>
<div style="position:absolute;left:556px;top:208.93px;font-size:14.63px;line-height:16.81px;color:#333;white-space:nowrap;transform:scaleX(0.9091);transform-origin:0 0;">Wā</div>
<div style="position:absolute;left:613px;top:208.93px;font-size:14.63px;line-height:16.81px;color:#333;white-space:nowrap;transform:scaleX(0.9091);transform-origin:0 0;">#</div>
<div style="position:absolute;left:682px;top:208.93px;font-size:14.63px;line-height:16.81px;color:#333;white-space:nowrap;transform:scaleX(0.9091);transform-origin:0 0;">Kaihoko</div>
<div style="position:absolute;left:410px;top:234px;width:335px;height:34px;background:#daf0fe"></div>
<div style="position:absolute;left:442px;top:234px;width:303px;height:34px;background:#0081c4"></div>
<div style="position:absolute;left:443.5px;top:234.53px;font-size:14.63px;line-height:16.81px;color:#00e4f4;white-space:nowrap;transform:scaleX(0.9091);transform-origin:0 0;">23.08.2024</div>
<div style="position:absolute;left:644.5px;top:234.53px;font-size:14.63px;line-height:16.81px;color:#00e4f4;white-space:nowrap;transform:scaleX(0.9091);transform-origin:0 0;">Paraire</div>
<svg style="left:442px;top:234px" width="303" height="34"><rect x="0.5" y="0.5" width="302" height="33" fill="none" stroke="#ec8a40" stroke-width="1" stroke-dasharray="1 1"/></svg>
<div style="position:absolute;left:410px;top:268px;width:335px;height:20px;background:#dff9e2"></div>
<div style="position:absolute;left:541.5px;top:268.03px;font-size:14.63px;line-height:16.81px;color:#333;white-space:nowrap;transform:scaleX(0.9091);transform-origin:0 0;">09:00</div>
<div style="position:absolute;left:410px;top:288px;width:335px;height:20px;background:#daf0fe"></div>
<div style="position:absolute;left:541.5px;top:288.03px;font-size:14.63px;line-height:16.81px;color:#333;white-space:nowrap;transform:scaleX(0.9091);transform-origin:0 0;">09:30</div>
<div style="position:absolute;left:410px;top:308px;width:335px;height:20px;background:#dff9e2"></div>
<div style="position:absolute;left:541px;top:308px;width:204px;height:20px;background:#fcfcb6"></div>
<div style="position:absolute;left:591px;top:308.03px;font-size:14.63px;line-height:16.81px;color:#333;white-space:nowrap;transform:scaleX(0.9091);transform-origin:0 0;">000080</div>
<div style="position:absolute;left:643.3px;top:308.03px;font-size:14.63px;line-height:16.81px;color:#333;white-space:nowrap;transform:scaleX(0.9091);transform-origin:0 0;">He manawanui 1</div>
<div style="position:absolute;left:541.5px;top:308.03px;font-size:14.63px;line-height:16.81px;color:#333;white-space:nowrap;transform:scaleX(0.9091);transform-origin:0 0;">10:00</div>
<div style="position:absolute;left:410px;top:328px;width:335px;height:20px;background:#daf0fe"></div>
<div style="position:absolute;left:541.5px;top:328.03px;font-size:14.63px;line-height:16.81px;color:#333;white-space:nowrap;transform:scaleX(0.9091);transform-origin:0 0;">10:30</div>
<div style="position:absolute;left:410px;top:348px;width:335px;height:20px;background:#dff9e2"></div>
<div style="position:absolute;left:541px;top:348px;width:204px;height:20px;background:#fcfcb6"></div>
<div style="position:absolute;left:591px;top:348.03px;font-size:14.63px;line-height:16.81px;color:#333;white-space:nowrap;transform:scaleX(0.9091);transform-origin:0 0;">000081</div>
<div style="position:absolute;left:643.3px;top:348.03px;font-size:14.63px;line-height:16.81px;color:#333;white-space:nowrap;transform:scaleX(0.9091);transform-origin:0 0;">He manawanui 2</div>
<div style="position:absolute;left:541.5px;top:348.03px;font-size:14.63px;line-height:16.81px;color:#333;white-space:nowrap;transform:scaleX(0.9091);transform-origin:0 0;">11:00</div>
<div style="position:absolute;left:410px;top:368px;width:335px;height:20px;background:#daf0fe"></div>
<div style="position:absolute;left:541.5px;top:368.03px;font-size:14.63px;line-height:16.81px;color:#333;white-space:nowrap;transform:scaleX(0.9091);transform-origin:0 0;">11:30</div>
<div style="position:absolute;left:410px;top:388px;width:335px;height:20px;background:#dff9e2"></div>
<div style="position:absolute;left:541.5px;top:388.03px;font-size:14.63px;line-height:16.81px;color:#333;white-space:nowrap;transform:scaleX(0.9091);transform-origin:0 0;">12:00</div>
<div style="position:absolute;left:410px;top:408px;width:335px;height:20px;background:#daf0fe"></div>
<div style="position:absolute;left:541.5px;top:408.03px;font-size:14.63px;line-height:16.81px;color:#333;white-space:nowrap;transform:scaleX(0.9091);transform-origin:0 0;">12:30</div>
<div style="position:absolute;left:410px;top:428px;width:335px;height:20px;background:#dff9e2"></div>
<div style="position:absolute;left:541.5px;top:428.03px;font-size:14.63px;line-height:16.81px;color:#333;white-space:nowrap;transform:scaleX(0.9091);transform-origin:0 0;">13:00</div>
<div style="position:absolute;left:410px;top:448px;width:335px;height:20px;background:#daf0fe"></div>
<div style="position:absolute;left:541.5px;top:448.03px;font-size:14.63px;line-height:16.81px;color:#333;white-space:nowrap;transform:scaleX(0.9091);transform-origin:0 0;">13:30</div>
<div style="position:absolute;left:410px;top:468px;width:335px;height:20px;background:#dff9e2"></div>
<div style="position:absolute;left:541.5px;top:468.03px;font-size:14.63px;line-height:16.81px;color:#333;white-space:nowrap;transform:scaleX(0.9091);transform-origin:0 0;">14:00</div>
<div style="position:absolute;left:410px;top:488px;width:335px;height:20px;background:#daf0fe"></div>
<div style="position:absolute;left:541.5px;top:488.03px;font-size:14.63px;line-height:16.81px;color:#333;white-space:nowrap;transform:scaleX(0.9091);transform-origin:0 0;">14:30</div>
<div style="position:absolute;left:410px;top:508px;width:335px;height:20px;background:#dff9e2"></div>
<div style="position:absolute;left:541.5px;top:508.03px;font-size:14.63px;line-height:16.81px;color:#333;white-space:nowrap;transform:scaleX(0.9091);transform-origin:0 0;">15:00</div>
<div style="position:absolute;left:410px;top:528px;width:335px;height:20px;background:#daf0fe"></div>
<div style="position:absolute;left:541.5px;top:528.03px;font-size:14.63px;line-height:16.81px;color:#333;white-space:nowrap;transform:scaleX(0.9091);transform-origin:0 0;">15:30</div>
<div style="position:absolute;left:410px;top:548px;width:335px;height:20px;background:#dff9e2"></div>
<div style="position:absolute;left:541.5px;top:548.03px;font-size:14.63px;line-height:16.81px;color:#333;white-space:nowrap;transform:scaleX(0.9091);transform-origin:0 0;">16:00</div>
<div style="position:absolute;left:410px;top:568px;width:335px;height:20px;background:#daf0fe"></div>
<div style="position:absolute;left:541.5px;top:568.03px;font-size:14.63px;line-height:16.81px;color:#333;white-space:nowrap;transform:scaleX(0.9091);transform-origin:0 0;">16:30</div>
<div style="position:absolute;left:410px;top:588px;width:335px;height:20px;background:#dff9e2"></div>
<div style="position:absolute;left:541.5px;top:588.03px;font-size:14.63px;line-height:16.81px;color:#333;white-space:nowrap;transform:scaleX(0.9091);transform-origin:0 0;">17:00</div>
<div style="position:absolute;left:410px;top:608px;width:335px;height:20px;background:#daf0fe"></div>
<div style="position:absolute;left:541.5px;top:608.03px;font-size:14.63px;line-height:16.81px;color:#333;white-space:nowrap;transform:scaleX(0.9091);transform-origin:0 0;">17:30</div>
<div style="position:absolute;left:410px;top:628px;width:335px;height:34px;background:#dff9e2"></div>
<div style="position:absolute;left:442px;top:628px;width:303px;height:34px;background:#0081c4"></div>
<div style="position:absolute;left:443.5px;top:628.53px;font-size:14.63px;line-height:16.81px;color:#fff;white-space:nowrap;transform:scaleX(0.9091);transform-origin:0 0;">24.08.2024</div>
<div style="position:absolute;left:644.5px;top:628.53px;font-size:14.63px;line-height:16.81px;color:#fff;white-space:nowrap;transform:scaleX(0.9091);transform-origin:0 0;">Rahoroi</div>
<div style="position:absolute;left:410px;top:662px;width:335px;height:20px;background:#daf0fe"></div>
<div style="position:absolute;left:541.5px;top:662.03px;font-size:14.63px;line-height:16.81px;color:#333;white-space:nowrap;transform:scaleX(0.9091);transform-origin:0 0;">09:00</div>
<div style="position:absolute;left:410px;top:682px;width:335px;height:20px;background:#dff9e2"></div>
<div style="position:absolute;left:541.5px;top:682.03px;font-size:14.63px;line-height:16.81px;color:#333;white-space:nowrap;transform:scaleX(0.9091);transform-origin:0 0;">09:30</div>
<div style="position:absolute;left:410px;top:702px;width:335px;height:20px;background:#daf0fe"></div>
<div style="position:absolute;left:541px;top:702px;width:204px;height:20px;background:#fcfcb6"></div>
<div style="position:absolute;left:591px;top:702.03px;font-size:14.63px;line-height:16.81px;color:#c80010;white-space:nowrap;transform:scaleX(0.9091);transform-origin:0 0;">000085</div>
<div style="position:absolute;left:643.3px;top:702.03px;font-size:14.63px;line-height:16.81px;color:#c80010;white-space:nowrap;transform:scaleX(0.9091);transform-origin:0 0;">He manawanui 6</div>
<div style="position:absolute;left:541.5px;top:702.03px;font-size:14.63px;line-height:16.81px;color:#c80010;white-space:nowrap;transform:scaleX(0.9091);transform-origin:0 0;">10:00</div>
<div style="position:absolute;left:410px;top:722px;width:335px;height:20px;background:#dff9e2"></div>
<div style="position:absolute;left:541.5px;top:722.03px;font-size:14.63px;line-height:16.81px;color:#333;white-space:nowrap;transform:scaleX(0.9091);transform-origin:0 0;">10:30</div>
<div style="position:absolute;left:410px;top:742px;width:335px;height:20px;background:#daf0fe"></div>
<div style="position:absolute;left:541.5px;top:742.03px;font-size:14.63px;line-height:16.81px;color:#333;white-space:nowrap;transform:scaleX(0.9091);transform-origin:0 0;">11:00</div>
<div style="position:absolute;left:410px;top:762px;width:335px;height:20px;background:#dff9e2"></div>
<div style="position:absolute;left:541.5px;top:762.03px;font-size:14.63px;line-height:16.81px;color:#333;white-space:nowrap;transform:scaleX(0.9091);transform-origin:0 0;">11:30</div>
<div style="position:absolute;left:410px;top:782px;width:335px;height:20px;background:#daf0fe"></div>
<div style="position:absolute;left:541.5px;top:782.03px;font-size:14.63px;line-height:16.81px;color:#333;white-space:nowrap;transform:scaleX(0.9091);transform-origin:0 0;">12:00</div>
<div style="position:absolute;left:410px;top:802px;width:335px;height:20px;background:#dff9e2"></div>
<div style="position:absolute;left:541.5px;top:802.03px;font-size:14.63px;line-height:16.81px;color:#333;white-space:nowrap;transform:scaleX(0.9091);transform-origin:0 0;">12:30</div>
<div style="position:absolute;left:410px;top:822px;width:335px;height:20px;background:#daf0fe"></div>
<div style="position:absolute;left:541.5px;top:822.03px;font-size:14.63px;line-height:16.81px;color:#333;white-space:nowrap;transform:scaleX(0.9091);transform-origin:0 0;">13:00</div>
<svg style="left:0;top:0" width="1545" height="860"><circle cx="425.5" cy="250.6" r="7.6" fill="none" stroke="#505050" stroke-width="1.5"/><path d="M422.308 247.408 L428.692 253.792 M428.692 250.1212 V253.792 H425.0212" fill="none" stroke="#505050" stroke-width="1.7249999999999999"/><circle cx="425.5" cy="644.6" r="7.6" fill="none" stroke="#505050" stroke-width="1.5"/><path d="M422.308 641.408 L428.692 647.792 M428.692 644.1212 V647.792 H425.0212" fill="none" stroke="#505050" stroke-width="1.7249999999999999"/><g transform="translate(476.8 308.3)"><path d="M2.4 3.6 Q4.2 11.2 14.4 16.0" fill="none" stroke="#000" stroke-width="4.6" stroke-linecap="round"/><ellipse cx="5.7" cy="2.9" rx="3.1" ry="2.0" transform="rotate(45 5.7 2.9)" fill="#f5401e"/><ellipse cx="16.0" cy="13.3" rx="3.1" ry="2.0" transform="rotate(50 16.0 13.3)" fill="#f5401e"/></g><path d="M507 311.29999999999995 V322.5" stroke="#f4a030" stroke-width="1.6" stroke-linecap="round"/><path d="M502.5 314.29999999999995 L511.5 319.5 M511.5 314.29999999999995 L502.5 319.5" stroke="#ff9a10" stroke-width="3.4" stroke-linecap="round"/><path d="M502.5 314.29999999999995 L511.5 319.5 M511.5 314.29999999999995 L502.5 319.5" stroke="#fff028" stroke-width="1.3" stroke-linecap="round"/><ellipse cx="507" cy="316.9" rx="2.6" ry="1.8" fill="#ffee20"/><path d="M521.8 317.0 L524.8 320.2 L529.8 313.4" fill="none" stroke="#000" stroke-width="2.6" stroke-linejoin="miter"/><g transform="translate(476.8 348.3)"><path d="M2.4 3.6 Q4.2 11.2 14.4 16.0" fill="none" stroke="#000" stroke-width="4.6" stroke-linecap="round"/><ellipse cx="5.7" cy="2.9" rx="3.1" ry="2.0" transform="rotate(45 5.7 2.9)" fill="#f5401e"/><ellipse cx="16.0" cy="13.3" rx="3.1" ry="2.0" transform="rotate(50 16.0 13.3)" fill="#f5401e"/></g><path d="M521.8 357.0 L524.8 360.2 L529.8 353.4" fill="none" stroke="#000" stroke-width="2.6" stroke-linejoin="miter"/><g transform="translate(476.8 702.3)"><path d="M2.4 3.6 Q4.2 11.2 14.4 16.0" fill="none" stroke="#000" stroke-width="4.6" stroke-linecap="round"/><ellipse cx="5.7" cy="2.9" rx="3.1" ry="2.0" transform="rotate(45 5.7 2.9)" fill="#f5401e"/><ellipse cx="16.0" cy="13.3" rx="3.1" ry="2.0" transform="rotate(50 16.0 13.3)" fill="#f5401e"/></g></svg>
<div style="position:absolute;left:746px;top:168px;width:19px;height:671px;background:#fff"></div>
<svg style="left:752px;top:175px" width="10" height="6"><path d="M0.2 4 L7.4 4 L3.8 0.4 Z" fill="#7a7a7a"/></svg>
<svg style="left:752px;top:826px" width="10" height="6"><path d="M0.2 0.2 L7.4 0.2 L3.8 3.8 Z" fill="#7a7a7a"/></svg>
<div style="position:absolute;left:751px;top:188px;width:10px;height:484px;background:#bcbcbc"></div>
<div style="position:absolute;left:407px;top:839px;width:361px;height:31px;background:#f0f0f0"></div>
<div style="position:absolute;left:408px;top:839px;width:359px;height:1px;background:#c8c8c8"></div>
<div style="position:absolute;left:775px;top:166px;width:359px;height:674px;border:2px solid #bdbdbd;border-right:1px solid #c8c8c8;border-bottom:1px solid #c8c8c8;background:#fff"></div>
<div style="position:absolute;left:777px;top:168px;width:336px;height:32px;background:#f5f5f5;border-bottom:1px solid #c4c4c4"></div>
<div style="position:absolute;left:756px;width:400px;text-align:center;top:175.33px;font-size:14.63px;line-height:16.81px;color:#333;white-space:nowrap;transform:scaleX(0.9091);transform-origin:50% 0;">2. Stomatologist 2 (Niho)</div>
<div style="position:absolute;left:777px;top:200px;width:336px;height:34px;background:#f5f5f5;border-bottom:1px solid #c4c4c4"></div>
<div style="position:absolute;left:907px;top:200px;width:1px;height:33px;background:#c4c4c4"></div>
<div style="position:absolute;left:957px;top:200px;width:1px;height:33px;background:#c4c4c4"></div>
<div style="position:absolute;left:1011px;top:200px;width:1px;height:33px;background:#c4c4c4"></div>
<div style="position:absolute;left:1112px;top:168px;width:1px;height:671px;background:#c4c4c4"></div>
<div style="position:absolute;left:820px;top:208.93px;font-size:14.63px;line-height:16.81px;color:#333;white-space:nowrap;transform:scaleX(0.9091);transform-origin:0 0;">Ra</div>
<svg style="left:886px;top:215px" width="12" height="7"><path d="M0 6.2 L10.5 6.2 L5.25 0.2 Z" fill="#555"/></svg>
<div style="position:absolute;left:923px;top:208.93px;font-size:14.63px;line-height:16.81px;color:#333;white-space:nowrap;transform:scaleX(0.9091);transform-origin:0 0;">Wā</div>
<div style="position:absolute;left:980px;top:208.93px;font-size:14.63px;line-height:16.81px;color:#333;white-space:nowrap;transform:scaleX(0.9091);transform-origin:0 0;">#</div>
<div style="position:absolute;left:1049px;top:208.93px;font-size:14.63px;line-height:16.81px;color:#333;white-space:nowrap;transform:scaleX(0.9091);transform-origin:0 0;">Kaihoko</div>
<div style="position:absolute;left:777px;top:234px;width:335px;height:34px;background:#daf0fe"></div>
<div style="position:absolute;left:809px;top:234px;width:303px;height:34px;background:#0081c4"></div>
<div style="position:absolute;left:810.5px;top:234.53px;font-size:14.63px;line-height:16.81px;color:#00e4f4;white-space:nowrap;transform:scaleX(0.9091);transform-origin:0 0;">23.08.2024</div>
<div style="position:absolute;left:1011.5px;top:234.53px;font-size:14.63px;line-height:16.81px;color:#00e4f4;white-space:nowrap;transform:scaleX(0.9091);transform-origin:0 0;">Paraire</div>
<div style="position:absolute;left:777px;top:268px;width:335px;height:20px;background:#dff9e2"></div>
<div style="position:absolute;left:908.5px;top:268.03px;font-size:14.63px;line-height:16.81px;color:#333;white-space:nowrap;transform:scaleX(0.9091);transform-origin:0 0;">09:00</div>
<div style="position:absolute;left:777px;top:288px;width:335px;height:20px;background:#daf0fe"></div>
<div style="position:absolute;left:908.5px;top:288.03px;font-size:14.63px;line-height:16.81px;color:#333;white-space:nowrap;transform:scaleX(0.9091);transform-origin:0 0;">09:30</div>
<div style="position:absolute;left:777px;top:308px;width:335px;height:20px;background:#dff9e2"></div>
<div style="position:absolute;left:908.5px;top:308.03px;font-size:14.63px;line-height:16.81px;color:#333;white-space:nowrap;transform:scaleX(0.9091);transform-origin:0 0;">10:00</div>
<div style="position:absolute;left:777px;top:328px;width:335px;height:20px;background:#daf0fe"></div>
<div style="position:absolute;left:908.5px;top:328.03px;font-size:14.63px;line-height:16.81px;color:#333;white-space:nowrap;transform:scaleX(0.9091);transform-origin:0 0;">10:30</div>
<div style="position:absolute;left:777px;top:348px;width:335px;height:20px;background:#dff9e2"></div>
<div style="position:absolute;left:908.5px;top:348.03px;font-size:14.63px;line-height:16.81px;color:#333;white-space:nowrap;transform:scaleX(0.9091);transform-origin:0 0;">11:00</div>
<div style="position:absolute;left:777px;top:368px;width:335px;height:20px;background:#daf0fe"></div>
<div style="position:absolute;left:908.5px;top:368.03px;font-size:14.63px;line-height:16.81px;color:#333;white-space:nowrap;transform:scaleX(0.9091);transform-origin:0 0;">11:30</div>
<div style="position:absolute;left:777px;top:388px;width:335px;height:20px;background:#dff9e2"></div>
<div style="position:absolute;left:908.5px;top:388.03px;font-size:14.63px;line-height:16.81px;color:#333;white-space:nowrap;transform:scaleX(0.9091);transform-origin:0 0;">12:00</div>
<div style="position:absolute;left:777px;top:408px;width:335px;height:20px;background:#daf0fe"></div>
<div style="position:absolute;left:908.5px;top:408.03px;font-size:14.63px;line-height:16.81px;color:#333;white-space:nowrap;transform:scaleX(0.9091);transform-origin:0 0;">12:30</div>
<div style="position:absolute;left:777px;top:428px;width:335px;height:20px;background:#dff9e2"></div>
<div style="position:absolute;left:908.5px;top:428.03px;font-size:14.63px;line-height:16.81px;color:#333;white-space:nowrap;transform:scaleX(0.9091);transform-origin:0 0;">13:00</div>
<div style="position:absolute;left:777px;top:448px;width:335px;height:20px;background:#daf0fe"></div>
<div style="position:absolute;left:908.5px;top:448.03px;font-size:14.63px;line-height:16.81px;color:#333;white-space:nowrap;transform:scaleX(0.9091);transform-origin:0 0;">13:30</div>
<div style="position:absolute;left:777px;top:468px;width:335px;height:20px;background:#dff9e2"></div>
<div style="position:absolute;left:908px;top:468px;width:204px;height:20px;background:#fcfcb6"></div>
<div style="position:absolute;left:958px;top:468.03px;font-size:14.63px;line-height:16.81px;color:#333;white-space:nowrap;transform:scaleX(0.9091);transform-origin:0 0;">000082</div>
<div style="position:absolute;left:1010.3px;top:468.03px;font-size:14.63px;line-height:16.81px;color:#333;white-space:nowrap;transform:scaleX(0.9091);transform-origin:0 0;">He manawanui 3</div>
<div style="position:absolute;left:908.5px;top:468.03px;font-size:14.63px;line-height:16.81px;color:#333;white-space:nowrap;transform:scaleX(0.9091);transform-origin:0 0;">14:00</div>
<div style="position:absolute;left:777px;top:488px;width:335px;height:20px;background:#daf0fe"></div>
<div style="position:absolute;left:908.5px;top:488.03px;font-size:14.63px;line-height:16.81px;color:#333;white-space:nowrap;transform:scaleX(0.9091);transform-origin:0 0;">14:30</div>
<div style="position:absolute;left:777px;top:508px;width:335px;height:20px;background:#dff9e2"></div>
<div style="position:absolute;left:908.5px;top:508.03px;font-size:14.63px;line-height:16.81px;color:#333;white-space:nowrap;transform:scaleX(0.9091);transform-origin:0 0;">15:00</div>
<div style="position:absolute;left:777px;top:528px;width:335px;height:20px;background:#daf0fe"></div>
<div style="position:absolute;left:908.5px;top:528.03px;font-size:14.63px;line-height:16.81px;color:#333;white-space:nowrap;transform:scaleX(0.9091);transform-origin:0 0;">15:30</div>
<div style="position:absolute;left:777px;top:548px;width:335px;height:20px;background:#dff9e2"></div>
<div style="position:absolute;left:908.5px;top:548.03px;font-size:14.63px;line-height:16.81px;color:#333;white-space:nowrap;transform:scaleX(0.9091);transform-origin:0 0;">16:00</div>
<div style="position:absolute;left:777px;top:568px;width:335px;height:20px;background:#daf0fe"></div>
<div style="position:absolute;left:908.5px;top:568.03px;font-size:14.63px;line-height:16.81px;color:#333;white-space:nowrap;transform:scaleX(0.9091);transform-origin:0 0;">16:30</div>
<div style="position:absolute;left:777px;top:588px;width:335px;height:20px;background:#dff9e2"></div>
<div style="position:absolute;left:908.5px;top:588.03px;font-size:14.63px;line-height:16.81px;color:#333;white-space:nowrap;transform:scaleX(0.9091);transform-origin:0 0;">17:00</div>
<div style="position:absolute;left:777px;top:608px;width:335px;height:20px;background:#daf0fe"></div>
<div style="position:absolute;left:908.5px;top:608.03px;font-size:14.63px;line-height:16.81px;color:#333;white-space:nowrap;transform:scaleX(0.9091);transform-origin:0 0;">17:30</div>
<div style="position:absolute;left:777px;top:628px;width:335px;height:34px;background:#dff9e2"></div>
<div style="position:absolute;left:809px;top:628px;width:303px;height:34px;background:#0081c4"></div>
<div style="position:absolute;left:810.5px;top:628.53px;font-size:14.63px;line-height:16.81px;color:#fff;white-space:nowrap;transform:scaleX(0.9091);transform-origin:0 0;">24.08.2024</div>
<div style="position:absolute;left:1011.5px;top:628.53px;font-size:14.63px;line-height:16.81px;color:#fff;white-space:nowrap;transform:scaleX(0.9091);transform-origin:0 0;">Rahoroi</div>
<div style="position:absolute;left:777px;top:662px;width:335px;height:20px;background:#daf0fe"></div>
<div style="position:absolute;left:908.5px;top:662.03px;font-size:14.63px;line-height:16.81px;color:#333;white-space:nowrap;transform:scaleX(0.9091);transform-origin:0 0;">09:00</div>
<div style="position:absolute;left:777px;top:682px;width:335px;height:20px;background:#dff9e2"></div>
<div style="position:absolute;left:908.5px;top:682.03px;font-size:14.63px;line-height:16.81px;color:#333;white-space:nowrap;transform:scaleX(0.9091);transform-origin:0 0;">09:30</div>
<div style="position:absolute;left:777px;top:702px;width:335px;height:20px;background:#daf0fe"></div>
<div style="position:absolute;left:908.5px;top:702.03px;font-size:14.63px;line-height:16.81px;color:#333;white-space:nowrap;transform:scaleX(0.9091);transform-origin:0 0;">10:00</div>
<div style="position:absolute;left:777px;top:722px;width:335px;height:20px;background:#dff9e2"></div>
<div style="position:absolute;left:908.5px;top:722.03px;font-size:14.63px;line-height:16.81px;color:#333;white-space:nowrap;transform:scaleX(0.9091);transform-origin:0 0;">10:30</div>
<div style="position:absolute;left:777px;top:742px;width:335px;height:20px;background:#daf0fe"></div>
<div style="position:absolute;left:908.5px;top:742.03px;font-size:14.63px;line-height:16.81px;color:#333;white-space:nowrap;transform:scaleX(0.9091);transform-origin:0 0;">11:00</div>
<div style="position:absolute;left:777px;top:762px;width:335px;height:20px;background:#dff9e2"></div>
<div style="position:absolute;left:908.5px;top:762.03px;font-size:14.63px;line-height:16.81px;color:#333;white-space:nowrap;transform:scaleX(0.9091);transform-origin:0 0;">11:30</div>
<div style="position:absolute;left:777px;top:782px;width:335px;height:20px;background:#daf0fe"></div>
<div style="position:absolute;left:908.5px;top:782.03px;font-size:14.63px;line-height:16.81px;color:#333;white-space:nowrap;transform:scaleX(0.9091);transform-origin:0 0;">12:00</div>
<div style="position:absolute;left:777px;top:802px;width:335px;height:20px;background:#dff9e2"></div>
<div style="position:absolute;left:908.5px;top:802.03px;font-size:14.63px;line-height:16.81px;color:#333;white-space:nowrap;transform:scaleX(0.9091);transform-origin:0 0;">12:30</div>
<div style="position:absolute;left:777px;top:822px;width:335px;height:20px;background:#daf0fe"></div>
<div style="position:absolute;left:908.5px;top:822.03px;font-size:14.63px;line-height:16.81px;color:#333;white-space:nowrap;transform:scaleX(0.9091);transform-origin:0 0;">13:00</div>
<svg style="left:0;top:0" width="1545" height="860"><circle cx="792.5" cy="250.6" r="7.6" fill="none" stroke="#505050" stroke-width="1.5"/><path d="M789.308 247.408 L795.692 253.792 M795.692 250.1212 V253.792 H792.0212" fill="none" stroke="#505050" stroke-width="1.7249999999999999"/><circle cx="792.5" cy="644.6" r="7.6" fill="none" stroke="#505050" stroke-width="1.5"/><path d="M789.308 641.408 L795.692 647.792 M795.692 644.1212 V647.792 H792.0212" fill="none" stroke="#505050" stroke-width="1.7249999999999999"/><g transform="translate(843.8 468.3)"><path d="M2.4 3.6 Q4.2 11.2 14.4 16.0" fill="none" stroke="#000" stroke-width="4.6" stroke-linecap="round"/><ellipse cx="5.7" cy="2.9" rx="3.1" ry="2.0" transform="rotate(45 5.7 2.9)" fill="#f5401e"/><ellipse cx="16.0" cy="13.3" rx="3.1" ry="2.0" transform="rotate(50 16.0 13.3)" fill="#f5401e"/></g><g transform="translate(863 467.6)"><path d="M12.5 13.5 L19 19.5" stroke="#909090" stroke-width="1.4" stroke-linecap="round"/><path d="M5.5 5 L13.8 13.5" stroke="#b8b8b8" stroke-width="5" stroke-linecap="butt"/><path d="M6 5.5 L13 12.8" stroke="#e8e8e8" stroke-width="2" /><circle cx="10.3" cy="9.8" r="1.2" fill="#404040"/><path d="M1.2 5.2 L5.2 1.2" stroke="#9a9a9a" stroke-width="1.8"/><path d="M3.2 3.2 L6.5 6.5" stroke="#a8a8a8" stroke-width="2.2"/></g><path d="M888.8 477.0 L891.8 480.2 L896.8 473.4" fill="none" stroke="#000" stroke-width="2.6" stroke-linejoin="miter"/></svg>
<div style="position:absolute;left:1113px;top:168px;width:19px;height:671px;background:#fff"></div>
<svg style="left:1119px;top:175px" width="10" height="6"><path d="M0.2 4 L7.4 4 L3.8 0.4 Z" fill="#7a7a7a"/></svg>
<svg style="left:1119px;top:826px" width="10" height="6"><path d="M0.2 0.2 L7.4 0.2 L3.8 3.8 Z" fill="#7a7a7a"/></svg>
<div style="position:absolute;left:1118px;top:188px;width:10px;height:484px;background:#bcbcbc"></div>
<div style="position:absolute;left:774px;top:839px;width:361px;height:31px;background:#f0f0f0"></div>
<div style="position:absolute;left:775px;top:839px;width:359px;height:1px;background:#c8c8c8"></div>
<div style="position:absolute;left:1143px;top:166px;width:359px;height:674px;border:2px solid #bdbdbd;border-right:1px solid #c8c8c8;border-bottom:1px solid #c8c8c8;background:#fff"></div>
<div style="position:absolute;left:1145px;top:168px;width:336px;height:32px;background:#f5f5f5;border-bottom:1px solid #c4c4c4"></div>
<div style="position:absolute;left:1124px;width:400px;text-align:center;top:175.33px;font-size:14.63px;line-height:16.81px;color:#333;white-space:nowrap;transform:scaleX(0.9091);transform-origin:50% 0;">3. Stomatologist 4 (Niho)</div>
<div style="position:absolute;left:1145px;top:200px;width:336px;height:34px;background:#f5f5f5;border-bottom:1px solid #c4c4c4"></div>
<div style="position:absolute;left:1275px;top:200px;width:1px;height:33px;background:#c4c4c4"></div>
<div style="position:absolute;left:1325px;top:200px;width:1px;height:33px;background:#c4c4c4"></div>
<div style="position:absolute;left:1379px;top:200px;width:1px;height:33px;background:#c4c4c4"></div>
<div style="position:absolute;left:1480px;top:168px;width:1px;height:671px;background:#c4c4c4"></div>
<div style="position:absolute;left:1188px;top:208.93px;font-size:14.63px;line-height:16.81px;color:#333;white-space:nowrap;transform:scaleX(0.9091);transform-origin:0 0;">Ra</div>
<svg style="left:1254px;top:215px" width="12" height="7"><path d="M0 6.2 L10.5 6.2 L5.25 0.2 Z" fill="#555"/></svg>
<div style="position:absolute;left:1291px;top:208.93px;font-size:14.63px;line-height:16.81px;color:#333;white-space:nowrap;transform:scaleX(0.9091);transform-origin:0 0;">Wā</div>
<div style="position:absolute;left:1348px;top:208.93px;font-size:14.63px;line-height:16.81px;color:#333;white-space:nowrap;transform:scaleX(0.9091);transform-origin:0 0;">#</div>
<div style="position:absolute;left:1417px;top:208.93px;font-size:14.63px;line-height:16.81px;color:#333;white-space:nowrap;transform:scaleX(0.9091);transform-origin:0 0;">Kaihoko</div>
<div style="position:absolute;left:1145px;top:234px;width:335px;height:34px;background:#daf0fe"></div>
<div style="position:absolute;left:1177px;top:234px;width:303px;height:34px;background:#0081c4"></div>
<div style="position:absolute;left:1178.5px;top:234.53px;font-size:14.63px;line-height:16.81px;color:#00e4f4;white-space:nowrap;transform:scaleX(0.9091);transform-origin:0 0;">23.08.2024</div>
<div style="position:absolute;left:1379.5px;top:234.53px;font-size:14.63px;line-height:16.81px;color:#00e4f4;white-space:nowrap;transform:scaleX(0.9091);transform-origin:0 0;">Paraire</div>
<div style="position:absolute;left:1145px;top:268px;width:335px;height:20px;background:#dff9e2"></div>
<div style="position:absolute;left:1276.5px;top:268.03px;font-size:14.63px;line-height:16.81px;color:#333;white-space:nowrap;transform:scaleX(0.9091);transform-origin:0 0;">09:00</div>
<div style="position:absolute;left:1145px;top:288px;width:335px;height:20px;background:#daf0fe"></div>
<div style="position:absolute;left:1276.5px;top:288.03px;font-size:14.63px;line-height:16.81px;color:#333;white-space:nowrap;transform:scaleX(0.9091);transform-origin:0 0;">09:30</div>
<div style="position:absolute;left:1145px;top:308px;width:335px;height:20px;background:#dff9e2"></div>
<div style="position:absolute;left:1276.5px;top:308.03px;font-size:14.63px;line-height:16.81px;color:#333;white-space:nowrap;transform:scaleX(0.9091);transform-origin:0 0;">10:00</div>
<div style="position:absolute;left:1145px;top:328px;width:335px;height:20px;background:#daf0fe"></div>
<div style="position:absolute;left:1276.5px;top:328.03px;font-size:14.63px;line-height:16.81px;color:#333;white-space:nowrap;transform:scaleX(0.9091);transform-origin:0 0;">10:30</div>
<div style="position:absolute;left:1145px;top:348px;width:335px;height:20px;background:#dff9e2"></div>
<div style="position:absolute;left:1276.5px;top:348.03px;font-size:14.63px;line-height:16.81px;color:#333;white-space:nowrap;transform:scaleX(0.9091);transform-origin:0 0;">11:00</div>
<div style="position:absolute;left:1145px;top:368px;width:335px;height:20px;background:#daf0fe"></div>
<div style="position:absolute;left:1276px;top:368px;width:204px;height:20px;background:#fdd4e6"></div>
<div style="position:absolute;left:1326px;top:368.03px;font-size:14.63px;line-height:16.81px;color:#333;white-space:nowrap;transform:scaleX(0.9091);transform-origin:0 0;">000083</div>
<div style="position:absolute;left:1378.3px;top:368.03px;font-size:14.63px;line-height:16.81px;color:#333;white-space:nowrap;transform:scaleX(0.9091);transform-origin:0 0;">He manawanui 4</div>
<div style="position:absolute;left:1276.5px;top:368.03px;font-size:14.63px;line-height:16.81px;color:#333;white-space:nowrap;transform:scaleX(0.9091);transform-origin:0 0;">11:30</div>
<div style="position:absolute;left:1145px;top:388px;width:335px;height:20px;background:#dff9e2"></div>
<div style="position:absolute;left:1276.5px;top:388.03px;font-size:14.63px;line-height:16.81px;color:#333;white-space:nowrap;transform:scaleX(0.9091);transform-origin:0 0;">12:00</div>
<div style="position:absolute;left:1145px;top:408px;width:335px;height:20px;background:#daf0fe"></div>
<div style="position:absolute;left:1276px;top:408px;width:204px;height:20px;background:#fcfcb6"></div>
<div style="position:absolute;left:1326px;top:408.03px;font-size:14.63px;line-height:16.81px;color:#333;white-space:nowrap;transform:scaleX(0.9091);transform-origin:0 0;">000084</div>
<div style="position:absolute;left:1378.3px;top:408.03px;font-size:14.63px;line-height:16.81px;color:#333;white-space:nowrap;transform:scaleX(0.9091);transform-origin:0 0;">He manawanui 5</div>
<div style="position:absolute;left:1276.5px;top:408.03px;font-size:14.63px;line-height:16.81px;color:#333;white-space:nowrap;transform:scaleX(0.9091);transform-origin:0 0;">12:30</div>
<div style="position:absolute;left:1145px;top:428px;width:335px;height:20px;background:#dff9e2"></div>
<div style="position:absolute;left:1276.5px;top:428.03px;font-size:14.63px;line-height:16.81px;color:#333;white-space:nowrap;transform:scaleX(0.9091);transform-origin:0 0;">13:00</div>
<div style="position:absolute;left:1145px;top:448px;width:335px;height:20px;background:#daf0fe"></div>
<div style="position:absolute;left:1276.5px;top:448.03px;font-size:14.63px;line-height:16.81px;color:#333;white-space:nowrap;transform:scaleX(0.9091);transform-origin:0 0;">13:30</div>
<div style="position:absolute;left:1145px;top:468px;width:335px;height:20px;background:#dff9e2"></div>
<div style="position:absolute;left:1276.5px;top:468.03px;font-size:14.63px;line-height:16.81px;color:#333;white-space:nowrap;transform:scaleX(0.9091);transform-origin:0 0;">14:00</div>
<div style="position:absolute;left:1145px;top:488px;width:335px;height:20px;background:#daf0fe"></div>
<div style="position:absolute;left:1276.5px;top:488.03px;font-size:14.63px;line-height:16.81px;color:#333;white-space:nowrap;transform:scaleX(0.9091);transform-origin:0 0;">14:30</div>
<div style="position:absolute;left:1145px;top:508px;width:335px;height:20px;background:#dff9e2"></div>
<div style="position:absolute;left:1276.5px;top:508.03px;font-size:14.63px;line-height:16.81px;color:#333;white-space:nowrap;transform:scaleX(0.9091);transform-origin:0 0;">15:00</div>
<div style="position:absolute;left:1145px;top:528px;width:335px;height:20px;background:#daf0fe"></div>
<div style="position:absolute;left:1276.5px;top:528.03px;font-size:14.63px;line-height:16.81px;color:#333;white-space:nowrap;transform:scaleX(0.9091);transform-origin:0 0;">15:30</div>
<div style="position:absolute;left:1145px;top:548px;width:335px;height:20px;background:#dff9e2"></div>
<div style="position:absolute;left:1276.5px;top:548.03px;font-size:14.63px;line-height:16.81px;color:#333;white-space:nowrap;transform:scaleX(0.9091);transform-origin:0 0;">16:00</div>
<div style="position:absolute;left:1145px;top:568px;width:335px;height:20px;background:#daf0fe"></div>
<div style="position:absolute;left:1276.5px;top:568.03px;font-size:14.63px;line-height:16.81px;color:#333;white-space:nowrap;transform:scaleX(0.9091);transform-origin:0 0;">16:30</div>
<div style="position:absolute;left:1145px;top:588px;width:335px;height:20px;background:#dff9e2"></div>
<div style="position:absolute;left:1276.5px;top:588.03px;font-size:14.63px;line-height:16.81px;color:#333;white-space:nowrap;transform:scaleX(0.9091);transform-origin:0 0;">17:00</div>
<div style="position:absolute;left:1145px;top:608px;width:335px;height:20px;background:#daf0fe"></div>
<div style="position:absolute;left:1276.5px;top:608.03px;font-size:14.63px;line-height:16.81px;color:#333;white-space:nowrap;transform:scaleX(0.9091);transform-origin:0 0;">17:30</div>
<div style="position:absolute;left:1145px;top:628px;width:335px;height:34px;background:#dff9e2"></div>
<div style="position:absolute;left:1177px;top:628px;width:303px;height:34px;background:#0081c4"></div>
<div style="position:absolute;left:1178.5px;top:628.53px;font-size:14.63px;line-height:16.81px;color:#fff;white-space:nowrap;transform:scaleX(0.9091);transform-origin:0 0;">24.08.2024</div>
<div style="position:absolute;left:1379.5px;top:628.53px;font-size:14.63px;line-height:16.81px;color:#fff;white-space:nowrap;transform:scaleX(0.9091);transform-origin:0 0;">Rahoroi</div>
<div style="position:absolute;left:1145px;top:662px;width:335px;height:20px;background:#daf0fe"></div>
<div style="position:absolute;left:1276.5px;top:662.03px;font-size:14.63px;line-height:16.81px;color:#333;white-space:nowrap;transform:scaleX(0.9091);transform-origin:0 0;">09:00</div>
<div style="position:absolute;left:1145px;top:682px;width:335px;height:20px;background:#dff9e2"></div>
<div style="position:absolute;left:1276.5px;top:682.03px;font-size:14.63px;line-height:16.81px;color:#333;white-space:nowrap;transform:scaleX(0.9091);transform-origin:0 0;">09:30</div>
<div style="position:absolute;left:1145px;top:702px;width:335px;height:20px;background:#daf0fe"></div>
<div style="position:absolute;left:1276px;top:702px;width:204px;height:20px;background:#fcfcb6"></div>
<div style="position:absolute;left:1326px;top:702.03px;font-size:14.63px;line-height:16.81px;color:#c80010;white-space:nowrap;transform:scaleX(0.9091);transform-origin:0 0;">000086</div>
<div style="position:absolute;left:1378.3px;top:702.03px;font-size:14.63px;line-height:16.81px;color:#c80010;white-space:nowrap;transform:scaleX(0.9091);transform-origin:0 0;">He manawanui 7</div>
<div style="position:absolute;left:1276.5px;top:702.03px;font-size:14.63px;line-height:16.81px;color:#c80010;white-space:nowrap;transform:scaleX(0.9091);transform-origin:0 0;">10:00</div>
<div style="position:absolute;left:1145px;top:722px;width:335px;height:20px;background:#dff9e2"></div>
<div style="position:absolute;left:1276.5px;top:722.03px;font-size:14.63px;line-height:16.81px;color:#333;white-space:nowrap;transform:scaleX(0.9091);transform-origin:0 0;">10:30</div>
<div style="position:absolute;left:1145px;top:742px;width:335px;height:20px;background:#daf0fe"></div>
<div style="position:absolute;left:1276.5px;top:742.03px;font-size:14.63px;line-height:16.81px;color:#333;white-space:nowrap;transform:scaleX(0.9091);transform-origin:0 0;">11:00</div>
<div style="position:absolute;left:1145px;top:762px;width:335px;height:20px;background:#dff9e2"></div>
<div style="position:absolute;left:1276.5px;top:762.03px;font-size:14.63px;line-height:16.81px;color:#333;white-space:nowrap;transform:scaleX(0.9091);transform-origin:0 0;">11:30</div>
<div style="position:absolute;left:1145px;top:782px;width:335px;height:20px;background:#daf0fe"></div>
<div style="position:absolute;left:1276.5px;top:782.03px;font-size:14.63px;line-height:16.81px;color:#333;white-space:nowrap;transform:scaleX(0.9091);transform-origin:0 0;">12:00</div>
<div style="position:absolute;left:1145px;top:802px;width:335px;height:20px;background:#dff9e2"></div>
<div style="position:absolute;left:1276.5px;top:802.03px;font-size:14.63px;line-height:16.81px;color:#333;white-space:nowrap;transform:scaleX(0.9091);transform-origin:0 0;">12:30</div>
<div style="position:absolute;left:1145px;top:822px;width:335px;height:20px;background:#daf0fe"></div>
<div style="position:absolute;left:1276.5px;top:822.03px;font-size:14.63px;line-height:16.81px;color:#333;white-space:nowrap;transform:scaleX(0.9091);transform-origin:0 0;">13:00</div>
<svg style="left:0;top:0" width="1545" height="860"><circle cx="1160.5" cy="250.6" r="7.6" fill="none" stroke="#505050" stroke-width="1.5"/><path d="M1157.308 247.408 L1163.692 253.792 M1163.692 250.1212 V253.792 H1160.0212" fill="none" stroke="#505050" stroke-width="1.7249999999999999"/><circle cx="1160.5" cy="644.6" r="7.6" fill="none" stroke="#505050" stroke-width="1.5"/><path d="M1157.308 641.408 L1163.692 647.792 M1163.692 644.1212 V647.792 H1160.0212" fill="none" stroke="#505050" stroke-width="1.7249999999999999"/><g transform="translate(1211.8 368.3)"><path d="M2.4 3.6 Q4.2 11.2 14.4 16.0" fill="none" stroke="#000" stroke-width="4.6" stroke-linecap="round"/><ellipse cx="5.7" cy="2.9" rx="3.1" ry="2.0" transform="rotate(45 5.7 2.9)" fill="#f5401e"/><ellipse cx="16.0" cy="13.3" rx="3.1" ry="2.0" transform="rotate(50 16.0 13.3)" fill="#f5401e"/></g><g transform="translate(1211.8 408.3)"><path d="M2.4 3.6 Q4.2 11.2 14.4 16.0" fill="none" stroke="#000" stroke-width="4.6" stroke-linecap="round"/><ellipse cx="5.7" cy="2.9" rx="3.1" ry="2.0" transform="rotate(45 5.7 2.9)" fill="#f5401e"/><ellipse cx="16.0" cy="13.3" rx="3.1" ry="2.0" transform="rotate(50 16.0 13.3)" fill="#f5401e"/></g><g transform="translate(1231.3 411)"><path d="M0.6 6.8 Q9.3 -4.2 18.2 6.8 Q9.3 17.5 0.6 6.8 Z" fill="#fff" stroke="#6a7ac0" stroke-width="1.4"/><path d="M0.6 6.8 Q9.3 -4.2 18.2 6.8" fill="none" stroke="#c88a58" stroke-width="1.9"/><circle cx="9.6" cy="6.3" r="4.6" fill="#7f9cc0"/><circle cx="9.6" cy="6.3" r="2" fill="#22334a"/></g><path d="M1256.8 417.0 L1259.8 420.2 L1264.8 413.4" fill="none" stroke="#000" stroke-width="2.6" stroke-linejoin="miter"/><path d="M1242 705.3000000000001 V716.5000000000001" stroke="#f4a030" stroke-width="1.6" stroke-linecap="round"/><path d="M1237.5 708.3000000000001 L1246.5 713.5000000000001 M1246.5 708.3000000000001 L1237.5 713.5000000000001" stroke="#ff9a10" stroke-width="3.4" stroke-linecap="round"/><path d="M1237.5 708.3000000000001 L1246.5 713.5000000000001 M1246.5 708.3000000000001 L1237.5 713.5000000000001" stroke="#fff028" stroke-width="1.3" stroke-linecap="round"/><ellipse cx="1242" cy="710.9000000000001" rx="2.6" ry="1.8" fill="#ffee20"/></svg>
<div style="position:absolute;left:1481px;top:168px;width:19px;height:671px;background:#fff"></div>
<svg style="left:1487px;top:175px" width="10" height="6"><path d="M0.2 4 L7.4 4 L3.8 0.4 Z" fill="#7a7a7a"/></svg>
<svg style="left:1487px;top:826px" width="10" height="6"><path d="M0.2 0.2 L7.4 0.2 L3.8 3.8 Z" fill="#7a7a7a"/></svg>
<div style="position:absolute;left:1486px;top:188px;width:10px;height:484px;background:#bcbcbc"></div>
<div style="position:absolute;left:1142px;top:839px;width:361px;height:31px;background:#f0f0f0"></div>
<div style="position:absolute;left:1143px;top:839px;width:359px;height:1px;background:#c8c8c8"></div>
<div style="position:absolute;left:22px;top:870px;width:1502px;height:5px;border:1px solid #cacaca;border-left:none;background:#fff"></div>
<div style="position:absolute;left:22px;top:870px;width:186px;height:56px;border:1px solid #c8c8c8;border-bottom:none;background:#fff"></div>
<div style="position:absolute;left:22px;top:924px;width:186px;height:3px;background:#10a0f8"></div>
<div style="position:absolute;left:81.8px;top:891.17px;font-size:13.50px;line-height:15.51px;color:#1e90e0;white-space:nowrap;">Rehitatanga</div>
<svg style="left:174px;top:893px" width="14" height="12"><path d="M1.5 1.5 L11 10.5 M11 1.5 L1.5 10.5" stroke="#1e90e0" stroke-width="2"/></svg>
<svg style="left:0;top:860px" width="1545" height="113" viewBox="0 860 1545 113"><rect x="40.5" y="887.5" width="29" height="25" rx="2.5" fill="url(#gWin)" stroke="#6a7ab0" stroke-width="1.2"/><rect x="41" y="888" width="28" height="5" rx="2" fill="#6a90d0"/><circle cx="66" cy="890.5" r="1.1" fill="#e04040"/><circle cx="38.7" cy="939" r="9.6" fill="#4a7cc0"/><circle cx="38.7" cy="934.5" r="1.6" fill="#fff"/><path d="M37.2 937 H40.2 V944 H37.2 Z" fill="#fff"/><path d="M244.5 932 C244.5 929 258.5 929 258.5 932 V945 C258.5 948.5 244.5 948.5 244.5 945 Z" fill="url(#gDB)" stroke="#c07820" stroke-width="0.8"/><path d="M244.5 936 Q251.5 939 258.5 936 M244.5 940.5 Q251.5 943.5 258.5 940.5" fill="none" stroke="#c07820" stroke-width="0.8"/><ellipse cx="251.5" cy="932" rx="7" ry="2" fill="#fde8b8" stroke="#c07820" stroke-width="0.6"/><g transform="translate(412 930.5) scale(1.0)"><path d="M0.4 15.2 C0.4 12 3.8 10.6 9 10.6 C14.2 10.6 17.6 12 17.6 15.2 Q17.6 16.9 15.8 16.9 H2.2 Q0.4 16.9 0.4 15.2 Z" fill="url(#gBody)" stroke="#5a8e28" stroke-width="0.7"/><ellipse cx="8.9" cy="5.4" rx="4.9" ry="5.3" fill="#b46a3a"/><path d="M6.3 4.2 C7.5 5.2 10.5 5 11.7 3.8 V7.5 C11.7 10.2 10.3 11.2 9 11.2 C7.7 11.2 6.3 10.2 6.3 7.5 Z" fill="url(#gFace)"/><path d="M4.2 6 C3.6 1.5 6.2 0.2 8.9 0.2 C11.6 0.2 14.2 1.5 13.6 6 C12.8 4 11.2 3.3 9.5 3.6 C8 3.2 5.2 3.6 4.2 6 Z" fill="#c87c48"/></g><rect x="591.3" y="931" width="17.2" height="17" fill="#fff" stroke="#8a9ad0" stroke-width="1"/><rect x="591.8" y="931.5" width="16.2" height="3.6" fill="#e06050"/><text x="600" y="946.3" font-family="Liberation Sans" font-weight="bold" font-size="10.5" fill="#2a3a70" text-anchor="middle">31</text><g fill="#606060"><rect x="1518.5" y="936" width="1.6" height="1.6"/><rect x="1515.5" y="939" width="1.6" height="1.6"/><rect x="1518.5" y="939" width="1.6" height="1.6"/><rect x="1512.5" y="942" width="1.6" height="1.6"/><rect x="1515.5" y="942" width="1.6" height="1.6"/><rect x="1518.5" y="942" width="1.6" height="1.6"/><rect x="1509.5" y="945.5" width="1.6" height="1.6"/><rect x="1512.5" y="945.5" width="1.6" height="1.6"/><rect x="1515.5" y="945.5" width="1.6" height="1.6"/><rect x="1518.5" y="945.5" width="1.6" height="1.6"/></g></svg>
<div style="position:absolute;left:69.5px;top:931.52px;font-size:14.96px;line-height:17.19px;color:#3a3a48;white-space:nowrap;transform:scaleX(0.9091);transform-origin:0 0;letter-spacing:0.15px;">7.2.9045.10 Standard</div>
<div style="position:absolute;left:280.5px;top:931.52px;font-size:14.96px;line-height:17.19px;color:#3a3a48;white-space:nowrap;transform:scaleX(0.9091);transform-origin:0 0;letter-spacing:0.2px;">localhost (utf8)</div>
<div style="position:absolute;left:450px;top:931.52px;font-size:14.96px;line-height:17.19px;color:#3a3a48;white-space:nowrap;transform:scaleX(0.9091);transform-origin:0 0;letter-spacing:-0.25px;">NIKOLAY (MAIN)</div>
<div style="position:absolute;left:630.5px;top:931.52px;font-size:14.96px;line-height:17.19px;color:#3a3a48;white-space:nowrap;transform:scaleX(0.9091);transform-origin:0 0;letter-spacing:0.15px;">23.08.2024</div>
<div style="position:absolute;left:761px;top:931.52px;font-size:14.96px;line-height:17.19px;color:#3a3a48;white-space:nowrap;transform:scaleX(0.9091);transform-origin:0 0;letter-spacing:0.4px;">09:46:14:862</div>
<div style="position:absolute;left:229px;top:931px;width:1px;height:17px;background:#b0b0b0"></div>
<div style="position:absolute;left:399px;top:931px;width:1px;height:17px;background:#b0b0b0"></div>
<div style="position:absolute;left:578px;top:931px;width:1px;height:17px;background:#b0b0b0"></div>
<div style="position:absolute;left:727px;top:931px;width:1px;height:17px;background:#b0b0b0"></div>
<div style="position:absolute;left:875px;top:931px;width:1px;height:17px;background:#b0b0b0"></div>
<div style="position:absolute;left:1494px;top:931px;width:1px;height:17px;background:#b0b0b0"></div>
</body></html>
